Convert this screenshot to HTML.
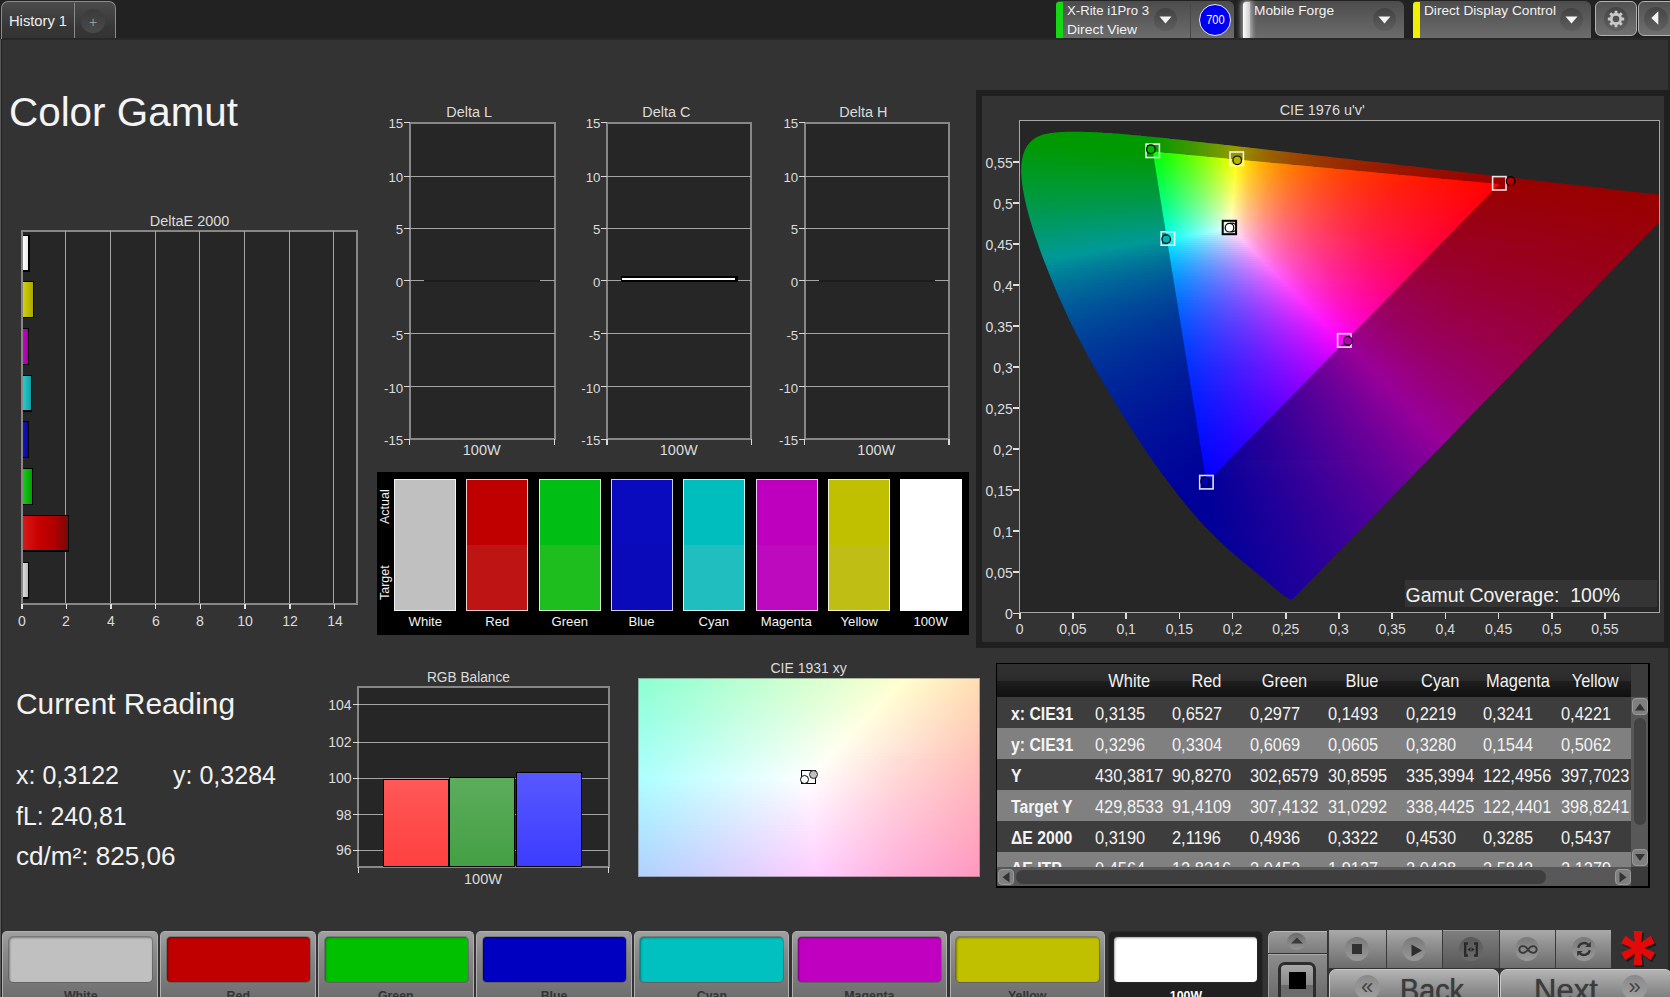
<!DOCTYPE html>
<html lang="en"><head><meta charset="utf-8"><title>Color Gamut</title>
<style>
html,body{margin:0;padding:0;background:#333;}
body{width:1670px;height:997px;overflow:hidden;font-family:"Liberation Sans",sans-serif;}
#app{position:relative;width:1670px;height:997px;overflow:hidden;background:#333;}
#app div,#app span,#app svg{position:absolute;box-sizing:border-box;}
.t{white-space:nowrap;line-height:1;display:block;}
.cl{left:0;top:0;width:639px;height:491px;}
.cl div{position:absolute;}

</style></head>
<body>
<div id="app">
<div style="left:0px;top:0px;width:1670px;height:39px;background:#222;"></div>
<div style="left:0px;top:38px;width:1670px;height:1.5px;background:#282828;"></div>
<div style="left:0px;top:39px;width:1px;height:958px;background:#5a5a5a;"></div>
<div style="left:1px;top:39px;width:1px;height:958px;background:#222;"></div>
<div style="left:1668px;top:39px;width:2px;height:958px;background:#252525;"></div>
<div style="left:1px;top:1px;width:115px;height:38px;border:1px solid #8a8a8a;border-bottom:none;border-radius:7px 7px 0 0;background:linear-gradient(#4b4b4b,#363636 70%,#333)"></div>
<div style="left:74px;top:3px;width:1px;height:35px;background:#8a8a8a;"></div>
<div style="left:2px;top:38.2px;width:1668px;height:1.3px;background:#282828;"></div>
<div style="left:81px;top:9px;width:24px;height:24px;border-radius:50%;background:linear-gradient(#3a3a3a,#4a4a4a)"></div>
<span class="t" style="left:9.00px;top:14.03px;font-size:14.5px;color:#f0f0f0;transform:scaleX(1.0139);transform-origin:0 0;">History 1</span>
<span class="t" style="left:88.91px;top:15.15px;font-size:14px;color:#999;">+</span>
<div style="left:1056px;top:1px;width:178px;height:37px;border-radius:4px 6px 0 0;background:linear-gradient(#4c4c4c,#6c6c6c);"></div>
<div style="left:1056px;top:1.5px;width:7px;height:36.5px;border-radius:3px 0 0 0;background:#14d814;"></div>
<span class="t" style="left:1066.50px;top:3.57px;font-size:13.5px;color:#f2f2f2;transform:scaleX(0.9759);transform-origin:0 0;">X-Rite i1Pro 3</span>
<span class="t" style="left:1066.50px;top:22.57px;font-size:13.5px;color:#f2f2f2;transform:scaleX(1.0291);transform-origin:0 0;">Direct View</span>
<div style="left:1154px;top:8px;width:23px;height:23px;border-radius:50%;background:linear-gradient(#424242,#5e5e5e)"></div>
<svg style="left:1159px;top:16px" width="13" height="8"><path d="M0.5 0.5h12l-6 7z" fill="#f4f4f4"/></svg>
<div style="left:1189.5px;top:4px;width:1px;height:34px;background:#484848;"></div>
<div style="left:1199.4px;top:4px;width:32px;height:32px;border-radius:50%;background:#0000f0;border:1.5px solid #e8e8ff"></div>
<span class="t" style="left:1205.27px;top:14.22px;font-size:12.5px;color:#fff;transform:scaleX(0.8871);transform-origin:50% 0;">700</span>
<div style="left:1243px;top:1px;width:161px;height:37px;border-radius:4px 6px 0 0;background:linear-gradient(#4c4c4c,#6c6c6c);"></div>
<div style="left:1243px;top:1.5px;width:7px;height:36.5px;border-radius:3px 0 0 0;background:linear-gradient(90deg,#fff,#ccc);box-shadow:0 0 5px 2px rgba(255,255,255,.55);clip-path:inset(-8px -8px 0 -8px);"></div>
<span class="t" style="left:1253.50px;top:3.57px;font-size:13.5px;color:#f2f2f2;transform:scaleX(1.0155);transform-origin:0 0;">Mobile Forge</span>
<div style="left:1372.5px;top:8px;width:23px;height:23px;border-radius:50%;background:linear-gradient(#424242,#5e5e5e)"></div>
<svg style="left:1377.5px;top:16px" width="13" height="8"><path d="M0.5 0.5h12l-6 7z" fill="#f4f4f4"/></svg>
<div style="left:1413px;top:1px;width:178px;height:37px;border-radius:4px 6px 0 0;background:linear-gradient(#4c4c4c,#6c6c6c);"></div>
<div style="left:1413px;top:1.5px;width:7px;height:36.5px;border-radius:3px 0 0 0;background:#f0f000;"></div>
<span class="t" style="left:1423.50px;top:3.57px;font-size:13.5px;color:#f2f2f2;transform:scaleX(1.0112);transform-origin:0 0;">Direct Display Control</span>
<div style="left:1559.5px;top:8px;width:23px;height:23px;border-radius:50%;background:linear-gradient(#424242,#5e5e5e)"></div>
<svg style="left:1564.5px;top:16px" width="13" height="8"><path d="M0.5 0.5h12l-6 7z" fill="#f4f4f4"/></svg>
<div style="left:1595px;top:1px;width:42px;height:35px;border-radius:6px;border:1px solid #b0b0b0;background:linear-gradient(#525252,#707070)"></div>
<div style="left:1604px;top:6.5px;width:24px;height:24px;border-radius:50%;background:linear-gradient(#444,#606060)"></div>
<svg style="left:1605px;top:7.6px" width="22" height="22" viewBox="-11 -11 22 22"><path fill-rule="evenodd" fill="#c8c8c8" d="M-1.42 -5.93L-1.43 -8.18L1.43 -8.18L1.42 -5.93L3.19 -5.20L4.77 -6.79L6.79 -4.77L5.20 -3.19L5.93 -1.42L8.18 -1.43L8.18 1.43L5.93 1.42L5.20 3.19L6.79 4.77L4.77 6.79L3.19 5.20L1.42 5.93L1.43 8.18L-1.43 8.18L-1.42 5.93L-3.19 5.20L-4.77 6.79L-6.79 4.77L-5.20 3.19L-5.93 1.42L-8.18 1.43L-8.18 -1.43L-5.93 -1.42L-5.20 -3.19L-6.79 -4.77L-4.77 -6.79L-3.19 -5.20ZM3.30 0A3.30 3.30 0 1 0 -3.30 0A3.30 3.30 0 1 0 3.30 0Z"/></svg>
<div style="left:1638px;top:1px;width:42px;height:35px;border-radius:6px;border:1px solid #b0b0b0;background:linear-gradient(#525252,#707070)"></div>
<div style="left:1644px;top:6.5px;width:24px;height:24px;border-radius:50%;background:linear-gradient(#444,#606060)"></div>
<svg style="left:1651px;top:11.3px" width="8" height="14"><path d="M7.3 0.3v13.4l-7-6.7z" fill="#f4f4f4"/></svg>
<span class="t" style="left:9.30px;top:92.14px;font-size:40px;color:#f4f4f4;transform:scaleX(1.0100);transform-origin:0 0;">Color Gamut</span>
<span class="t" style="left:151.17px;top:213.75px;font-size:14px;color:#dcdcdc;transform:scaleX(1.0318);transform-origin:50% 0;">DeltaE 2000</span>
<div style="left:20.7px;top:229.7px;width:337.6px;height:374.9px;background:#262626;border:2px solid #878787"></div>
<div style="left:65px;top:231px;width:1px;height:372px;background:#a4a4a4;"></div>
<div style="left:110px;top:231px;width:1px;height:372px;background:#a4a4a4;"></div>
<div style="left:155px;top:231px;width:1px;height:372px;background:#a4a4a4;"></div>
<div style="left:199px;top:231px;width:1px;height:372px;background:#a4a4a4;"></div>
<div style="left:244px;top:231px;width:1px;height:372px;background:#a4a4a4;"></div>
<div style="left:289px;top:231px;width:1px;height:372px;background:#a4a4a4;"></div>
<div style="left:333px;top:231px;width:1px;height:372px;background:#a4a4a4;"></div>
<div style="left:21px;top:604px;width:1.5px;height:5px;background:#e0e0e0;"></div>
<span class="t" style="left:17.67px;top:613.73px;font-size:14.5px;color:#dcdcdc;transform:scaleX(0.9700);transform-origin:50% 0;">0</span>
<div style="left:65.5px;top:604px;width:1.5px;height:5px;background:#e0e0e0;"></div>
<span class="t" style="left:62.37px;top:613.73px;font-size:14.5px;color:#dcdcdc;transform:scaleX(0.9700);transform-origin:50% 0;">2</span>
<div style="left:110.2px;top:604px;width:1.5px;height:5px;background:#e0e0e0;"></div>
<span class="t" style="left:107.07px;top:613.73px;font-size:14.5px;color:#dcdcdc;transform:scaleX(0.9700);transform-origin:50% 0;">4</span>
<div style="left:154.9px;top:604px;width:1.5px;height:5px;background:#e0e0e0;"></div>
<span class="t" style="left:151.77px;top:613.73px;font-size:14.5px;color:#dcdcdc;transform:scaleX(0.9700);transform-origin:50% 0;">6</span>
<div style="left:199.6px;top:604px;width:1.5px;height:5px;background:#e0e0e0;"></div>
<span class="t" style="left:196.47px;top:613.73px;font-size:14.5px;color:#dcdcdc;transform:scaleX(0.9700);transform-origin:50% 0;">8</span>
<div style="left:244.3px;top:604px;width:1.5px;height:5px;background:#e0e0e0;"></div>
<span class="t" style="left:237.14px;top:613.73px;font-size:14.5px;color:#dcdcdc;transform:scaleX(0.9700);transform-origin:50% 0;">10</span>
<div style="left:289px;top:604px;width:1.5px;height:5px;background:#e0e0e0;"></div>
<span class="t" style="left:281.84px;top:613.73px;font-size:14.5px;color:#dcdcdc;transform:scaleX(0.9700);transform-origin:50% 0;">12</span>
<div style="left:333.7px;top:604px;width:1.5px;height:5px;background:#e0e0e0;"></div>
<span class="t" style="left:326.54px;top:613.73px;font-size:14.5px;color:#dcdcdc;transform:scaleX(0.9700);transform-origin:50% 0;">14</span>
<div style="left:22.5px;top:234.6px;width:7.099px;height:37px;background:#000;"></div>
<div style="left:22.5px;top:235.6px;width:5.599px;height:34.5px;background:linear-gradient(90deg,#ffffff,#e8e8e8);"></div>
<div style="left:22.5px;top:281.3px;width:11.6517px;height:37px;background:#000;"></div>
<div style="left:22.5px;top:282.3px;width:10.1517px;height:34.5px;background:linear-gradient(90deg,#d2d200,#a8a800);"></div>
<div style="left:22.5px;top:328px;width:6.84198px;height:37px;background:#000;"></div>
<div style="left:22.5px;top:329px;width:5.34198px;height:34.5px;background:linear-gradient(90deg,#d000d0,#9a009a);"></div>
<div style="left:22.5px;top:374.7px;width:9.62455px;height:37px;background:#000;"></div>
<div style="left:22.5px;top:375.7px;width:8.12455px;height:34.5px;background:linear-gradient(90deg,#20d0d0,#10a0a0);"></div>
<div style="left:22.5px;top:421.4px;width:6.92467px;height:37px;background:#000;"></div>
<div style="left:22.5px;top:422.4px;width:5.42467px;height:34.5px;background:linear-gradient(90deg,#1010d0,#0a0a90);"></div>
<div style="left:22.5px;top:468.1px;width:10.532px;height:37px;background:#000;"></div>
<div style="left:22.5px;top:469.1px;width:9.03196px;height:34.5px;background:linear-gradient(90deg,#10d010,#0a9a0a);"></div>
<div style="left:22.5px;top:514.8px;width:46.8731px;height:37px;background:#000;"></div>
<div style="left:22.5px;top:515.8px;width:45.3731px;height:34.5px;background:linear-gradient(90deg,#d81818,#c80000 35%,#b00000 70%,#780808);"></div>
<div style="left:22.5px;top:561.5px;width:6.62965px;height:37px;background:#000;"></div>
<div style="left:22.5px;top:562.5px;width:5.12965px;height:34.5px;background:linear-gradient(90deg,#dcdcdc,#b8b8b8);"></div>
<span class="t" style="left:446.52px;top:105.15px;font-size:14px;color:#dcdcdc;transform:scaleX(1.0300);transform-origin:50% 0;">Delta L</span>
<div style="left:408.5px;top:121.5px;width:147px;height:318.7px;background:#262626;border:2px solid #878787"></div>
<div style="left:403.5px;top:121.8px;width:6px;height:1.5px;background:#d8d8d8;"></div>
<span class="t" style="left:388.41px;top:117.44px;font-size:13.3px;color:#dcdcdc;">15</span>
<div style="left:409.5px;top:176px;width:145px;height:1px;background:#a4a4a4;"></div>
<div style="left:403.5px;top:175.8px;width:6px;height:1.5px;background:#d8d8d8;"></div>
<span class="t" style="left:388.41px;top:171.14px;font-size:13.3px;color:#dcdcdc;">10</span>
<div style="left:409.5px;top:228px;width:145px;height:1px;background:#a4a4a4;"></div>
<div style="left:403.5px;top:227.8px;width:6px;height:1.5px;background:#d8d8d8;"></div>
<span class="t" style="left:395.80px;top:223.14px;font-size:13.3px;color:#dcdcdc;">5</span>
<div style="left:409.5px;top:280px;width:145px;height:1px;background:#a4a4a4;"></div>
<div style="left:403.5px;top:279.8px;width:6px;height:1.5px;background:#d8d8d8;"></div>
<span class="t" style="left:395.80px;top:275.64px;font-size:13.3px;color:#dcdcdc;">0</span>
<div style="left:409.5px;top:333px;width:145px;height:1px;background:#a4a4a4;"></div>
<div style="left:403.5px;top:332.8px;width:6px;height:1.5px;background:#d8d8d8;"></div>
<span class="t" style="left:391.38px;top:328.64px;font-size:13.3px;color:#dcdcdc;">-5</span>
<div style="left:409.5px;top:386px;width:145px;height:1px;background:#a4a4a4;"></div>
<div style="left:403.5px;top:385.8px;width:6px;height:1.5px;background:#d8d8d8;"></div>
<span class="t" style="left:383.98px;top:381.94px;font-size:13.3px;color:#dcdcdc;">-10</span>
<div style="left:403.5px;top:438.8px;width:6px;height:1.5px;background:#d8d8d8;"></div>
<span class="t" style="left:383.98px;top:434.14px;font-size:13.3px;color:#dcdcdc;">-15</span>
<div style="left:408.8px;top:439.2px;width:1.5px;height:6px;background:#d8d8d8;"></div>
<div style="left:553.8px;top:439.2px;width:1.5px;height:6px;background:#d8d8d8;"></div>
<span class="t" style="left:462.76px;top:443.03px;font-size:14.5px;color:#dcdcdc;">100W</span>
<div style="left:423.5px;top:279.7px;width:116px;height:2px;background:#1c1c1c;"></div>
<span class="t" style="left:642.86px;top:105.15px;font-size:14px;color:#dcdcdc;transform:scaleX(1.0300);transform-origin:50% 0;">Delta C</span>
<div style="left:605.8px;top:121.5px;width:146.5px;height:318.7px;background:#262626;border:2px solid #878787"></div>
<div style="left:600.8px;top:121.8px;width:6px;height:1.5px;background:#d8d8d8;"></div>
<span class="t" style="left:585.71px;top:117.44px;font-size:13.3px;color:#dcdcdc;">15</span>
<div style="left:606.8px;top:176px;width:144.5px;height:1px;background:#a4a4a4;"></div>
<div style="left:600.8px;top:175.8px;width:6px;height:1.5px;background:#d8d8d8;"></div>
<span class="t" style="left:585.71px;top:171.14px;font-size:13.3px;color:#dcdcdc;">10</span>
<div style="left:606.8px;top:228px;width:144.5px;height:1px;background:#a4a4a4;"></div>
<div style="left:600.8px;top:227.8px;width:6px;height:1.5px;background:#d8d8d8;"></div>
<span class="t" style="left:593.10px;top:223.14px;font-size:13.3px;color:#dcdcdc;">5</span>
<div style="left:606.8px;top:280px;width:144.5px;height:1px;background:#a4a4a4;"></div>
<div style="left:600.8px;top:279.8px;width:6px;height:1.5px;background:#d8d8d8;"></div>
<span class="t" style="left:593.10px;top:275.64px;font-size:13.3px;color:#dcdcdc;">0</span>
<div style="left:606.8px;top:333px;width:144.5px;height:1px;background:#a4a4a4;"></div>
<div style="left:600.8px;top:332.8px;width:6px;height:1.5px;background:#d8d8d8;"></div>
<span class="t" style="left:588.68px;top:328.64px;font-size:13.3px;color:#dcdcdc;">-5</span>
<div style="left:606.8px;top:386px;width:144.5px;height:1px;background:#a4a4a4;"></div>
<div style="left:600.8px;top:385.8px;width:6px;height:1.5px;background:#d8d8d8;"></div>
<span class="t" style="left:581.28px;top:381.94px;font-size:13.3px;color:#dcdcdc;">-10</span>
<div style="left:600.8px;top:438.8px;width:6px;height:1.5px;background:#d8d8d8;"></div>
<span class="t" style="left:581.28px;top:434.14px;font-size:13.3px;color:#dcdcdc;">-15</span>
<div style="left:606.1px;top:439.2px;width:1.5px;height:6px;background:#d8d8d8;"></div>
<div style="left:750.6px;top:439.2px;width:1.5px;height:6px;background:#d8d8d8;"></div>
<span class="t" style="left:659.76px;top:443.03px;font-size:14.5px;color:#dcdcdc;">100W</span>
<div style="left:620.8px;top:276.2px;width:117px;height:5.5px;background:#000;"></div>
<div style="left:622.3px;top:277.5px;width:113px;height:2.8px;background:#fff;"></div>
<span class="t" style="left:839.96px;top:105.15px;font-size:14px;color:#dcdcdc;transform:scaleX(1.0300);transform-origin:50% 0;">Delta H</span>
<div style="left:803.5px;top:121.5px;width:146.5px;height:318.7px;background:#262626;border:2px solid #878787"></div>
<div style="left:798.5px;top:121.8px;width:6px;height:1.5px;background:#d8d8d8;"></div>
<span class="t" style="left:783.41px;top:117.44px;font-size:13.3px;color:#dcdcdc;">15</span>
<div style="left:804.5px;top:176px;width:144.5px;height:1px;background:#a4a4a4;"></div>
<div style="left:798.5px;top:175.8px;width:6px;height:1.5px;background:#d8d8d8;"></div>
<span class="t" style="left:783.41px;top:171.14px;font-size:13.3px;color:#dcdcdc;">10</span>
<div style="left:804.5px;top:228px;width:144.5px;height:1px;background:#a4a4a4;"></div>
<div style="left:798.5px;top:227.8px;width:6px;height:1.5px;background:#d8d8d8;"></div>
<span class="t" style="left:790.80px;top:223.14px;font-size:13.3px;color:#dcdcdc;">5</span>
<div style="left:804.5px;top:280px;width:144.5px;height:1px;background:#a4a4a4;"></div>
<div style="left:798.5px;top:279.8px;width:6px;height:1.5px;background:#d8d8d8;"></div>
<span class="t" style="left:790.80px;top:275.64px;font-size:13.3px;color:#dcdcdc;">0</span>
<div style="left:804.5px;top:333px;width:144.5px;height:1px;background:#a4a4a4;"></div>
<div style="left:798.5px;top:332.8px;width:6px;height:1.5px;background:#d8d8d8;"></div>
<span class="t" style="left:786.38px;top:328.64px;font-size:13.3px;color:#dcdcdc;">-5</span>
<div style="left:804.5px;top:386px;width:144.5px;height:1px;background:#a4a4a4;"></div>
<div style="left:798.5px;top:385.8px;width:6px;height:1.5px;background:#d8d8d8;"></div>
<span class="t" style="left:778.98px;top:381.94px;font-size:13.3px;color:#dcdcdc;">-10</span>
<div style="left:798.5px;top:438.8px;width:6px;height:1.5px;background:#d8d8d8;"></div>
<span class="t" style="left:778.98px;top:434.14px;font-size:13.3px;color:#dcdcdc;">-15</span>
<div style="left:803.8px;top:439.2px;width:1.5px;height:6px;background:#d8d8d8;"></div>
<div style="left:948.3px;top:439.2px;width:1.5px;height:6px;background:#d8d8d8;"></div>
<span class="t" style="left:857.36px;top:443.03px;font-size:14.5px;color:#dcdcdc;">100W</span>
<div style="left:818.5px;top:279.7px;width:116px;height:2px;background:#1c1c1c;"></div>
<div style="left:377px;top:472px;width:592px;height:162.8px;background:#000;"></div>
<div style="left:394px;top:479px;width:62px;height:131.5px;background:linear-gradient(#c0c0c0 50%,#c0c0c0 50%);border:1px solid rgba(255,255,255,.8)"></div>
<span class="t" style="left:407.75px;top:614.57px;font-size:13.5px;color:#f4f4f4;transform:scaleX(0.9700);transform-origin:50% 0;">White</span>
<div style="left:466.3px;top:479px;width:62px;height:131.5px;background:linear-gradient(#c00000 50%,#be1414 50%);border:1px solid rgba(255,255,255,.8)"></div>
<span class="t" style="left:484.92px;top:614.57px;font-size:13.5px;color:#f4f4f4;transform:scaleX(0.9700);transform-origin:50% 0;">Red</span>
<div style="left:538.6px;top:479px;width:62px;height:131.5px;background:linear-gradient(#00be14 50%,#1ebe1e 50%);border:1px solid rgba(255,255,255,.8)"></div>
<span class="t" style="left:550.84px;top:614.57px;font-size:13.5px;color:#f4f4f4;transform:scaleX(0.9700);transform-origin:50% 0;">Green</span>
<div style="left:610.9px;top:479px;width:62px;height:131.5px;background:linear-gradient(#0a0abe 50%,#0a0ab8 50%);border:1px solid rgba(255,255,255,.8)"></div>
<span class="t" style="left:628.39px;top:614.57px;font-size:13.5px;color:#f4f4f4;transform:scaleX(0.9700);transform-origin:50% 0;">Blue</span>
<div style="left:683.2px;top:479px;width:62px;height:131.5px;background:linear-gradient(#00bebe 50%,#20bebe 50%);border:1px solid rgba(255,255,255,.8)"></div>
<span class="t" style="left:698.44px;top:614.57px;font-size:13.5px;color:#f4f4f4;transform:scaleX(0.9700);transform-origin:50% 0;">Cyan</span>
<div style="left:755.5px;top:479px;width:62px;height:131.5px;background:linear-gradient(#be00be 50%,#be0abe 50%);border:1px solid rgba(255,255,255,.8)"></div>
<span class="t" style="left:760.23px;top:614.57px;font-size:13.5px;color:#f4f4f4;transform:scaleX(0.9700);transform-origin:50% 0;">Magenta</span>
<div style="left:827.8px;top:479px;width:62px;height:131.5px;background:linear-gradient(#c0c000 50%,#bebe14 50%);border:1px solid rgba(255,255,255,.8)"></div>
<span class="t" style="left:839.54px;top:614.57px;font-size:13.5px;color:#f4f4f4;transform:scaleX(0.9700);transform-origin:50% 0;">Yellow</span>
<div style="left:900.1px;top:479px;width:62px;height:131.5px;background:linear-gradient(#ffffff 50%,#ffffff 50%);border:1px solid rgba(255,255,255,.8)"></div>
<span class="t" style="left:913.47px;top:614.57px;font-size:13.5px;color:#f4f4f4;transform:scaleX(0.9700);transform-origin:50% 0;">100W</span>
<span class="t" style="left:379px;top:524px;font-size:12.5px;color:#f0f0f0;transform:rotate(-90deg);transform-origin:0 0;">Actual</span>
<span class="t" style="left:379px;top:600px;font-size:12.5px;color:#f0f0f0;transform:rotate(-90deg);transform-origin:0 0;">Target</span>
<span class="t" style="left:16.00px;top:690.05px;font-size:29px;color:#f2f2f2;transform:scaleX(1.0293);transform-origin:0 0;">Current Reading</span>
<span class="t" style="left:16.00px;top:763.41px;font-size:25.5px;color:#f2f2f2;transform:scaleX(0.9818);transform-origin:0 0;">x: 0,3122</span>
<span class="t" style="left:173.00px;top:763.41px;font-size:25.5px;color:#f2f2f2;transform:scaleX(0.9818);transform-origin:0 0;">y: 0,3284</span>
<span class="t" style="left:16.00px;top:803.91px;font-size:25.5px;color:#f2f2f2;transform:scaleX(0.9743);transform-origin:0 0;">fL: 240,81</span>
<span class="t" style="left:16.00px;top:844.11px;font-size:25.5px;color:#f2f2f2;transform:scaleX(1.0231);transform-origin:0 0;">cd/m²: 825,06</span>
<span class="t" style="left:425.99px;top:670.15px;font-size:14px;color:#dcdcdc;transform:scaleX(0.9786);transform-origin:50% 0;">RGB Balance</span>
<div style="left:357.4px;top:685.8px;width:252.3px;height:182.2px;background:#262626;border:2px solid #878787"></div>
<div style="left:359px;top:704px;width:249px;height:1px;background:#a4a4a4;"></div>
<div style="left:352.5px;top:703.8px;width:6px;height:1.5px;background:#d8d8d8;"></div>
<span class="t" style="left:328.14px;top:698.15px;font-size:14px;color:#dcdcdc;">104</span>
<div style="left:359px;top:742px;width:249px;height:1px;background:#a4a4a4;"></div>
<div style="left:352.5px;top:741.8px;width:6px;height:1.5px;background:#d8d8d8;"></div>
<span class="t" style="left:328.14px;top:735.15px;font-size:14px;color:#dcdcdc;">102</span>
<div style="left:359px;top:778px;width:249px;height:1px;background:#a4a4a4;"></div>
<div style="left:352.5px;top:777.8px;width:6px;height:1.5px;background:#d8d8d8;"></div>
<span class="t" style="left:328.14px;top:771.15px;font-size:14px;color:#dcdcdc;">100</span>
<div style="left:359px;top:814px;width:249px;height:1px;background:#a4a4a4;"></div>
<div style="left:352.5px;top:813.8px;width:6px;height:1.5px;background:#d8d8d8;"></div>
<span class="t" style="left:335.93px;top:807.65px;font-size:14px;color:#dcdcdc;">98</span>
<div style="left:359px;top:850px;width:249px;height:1px;background:#a4a4a4;"></div>
<div style="left:352.5px;top:849.8px;width:6px;height:1.5px;background:#d8d8d8;"></div>
<span class="t" style="left:335.93px;top:843.15px;font-size:14px;color:#dcdcdc;">96</span>
<div style="left:357.7px;top:867px;width:1.5px;height:6px;background:#d8d8d8;"></div>
<div style="left:607.9px;top:867px;width:1.5px;height:6px;background:#d8d8d8;"></div>
<div style="left:382.6px;top:778.6px;width:66.3px;height:88.4px;background:#000;"></div>
<div style="left:383.6px;top:779.6px;width:64.3px;height:86.9px;background:linear-gradient(#ff5858,#ff4040);"></div>
<div style="left:448.8px;top:776.6px;width:66.3px;height:90.4px;background:#000;"></div>
<div style="left:449.8px;top:777.6px;width:64.3px;height:88.9px;background:linear-gradient(#5cac5c,#44a044);"></div>
<div style="left:515.5px;top:772.4px;width:66.5px;height:94.6px;background:#000;"></div>
<div style="left:516.5px;top:773.4px;width:64.5px;height:93.1px;background:linear-gradient(#5858ff,#3c3cff);"></div>
<span class="t" style="left:464.06px;top:872.03px;font-size:14.5px;color:#dcdcdc;">100W</span>
<div style="left:975.7px;top:89.8px;width:694.3px;height:558px;background:#333;border:6.5px solid #1f1f1f"></div>
<span class="t" style="left:1280.81px;top:102.85px;font-size:14px;color:#dcdcdc;transform:scaleX(1.0317);transform-origin:50% 0;">CIE 1976 u'v'</span>
<div style="left:1018.6px;top:119.6px;width:641.8px;height:493.8px;background:#262626;border:1.7px solid #a6a6a6"></div>
<div style="left:1020px;top:121px;width:639px;height:491px;overflow:hidden"><div class="cl" style="clip-path:polygon(273.1px 477.8px,270.4px 478.3px,268.1px 477.5px,266.0px 476.1px,264.0px 474.7px,261.6px 472.8px,259.6px 471.2px,257.5px 469.5px,255.1px 467.5px,252.4px 465.2px,249.5px 462.7px,246.3px 460.1px,244.6px 458.6px,242.8px 457.1px,240.9px 455.5px,238.9px 453.9px,236.7px 452.1px,234.5px 450.2px,232.1px 448.3px,229.7px 446.3px,227.2px 444.2px,224.5px 442.0px,221.8px 439.8px,219.0px 437.4px,216.0px 434.9px,213.0px 432.2px,209.7px 429.4px,206.4px 426.4px,203.0px 423.3px,199.4px 419.9px,195.8px 416.5px,192.0px 412.8px,188.1px 408.8px,183.9px 404.4px,179.5px 399.7px,174.8px 394.3px,169.8px 388.4px,164.5px 382.0px,158.9px 375.1px,153.1px 367.6px,147.1px 359.8px,141.0px 351.5px,134.7px 342.8px,128.3px 333.5px,121.8px 323.9px,115.1px 313.7px,108.3px 303.1px,101.5px 292.2px,94.7px 280.9px,87.9px 269.5px,81.1px 257.9px,74.3px 246.2px,67.8px 234.4px,61.4px 222.5px,55.2px 210.6px,49.4px 198.9px,44.0px 187.3px,38.9px 176.0px,34.2px 164.9px,29.7px 154.1px,25.6px 143.7px,21.7px 133.7px,18.3px 124.1px,15.1px 115.1px,12.4px 106.5px,10.0px 98.5px,7.9px 90.9px,6.1px 83.9px,4.6px 77.3px,3.4px 71.1px,2.5px 65.4px,1.8px 60.1px,1.4px 55.2px,1.2px 50.7px,1.3px 46.4px,1.5px 42.5px,2.0px 38.9px,2.7px 35.5px,3.6px 32.4px,4.7px 29.5px,6.0px 26.9px,7.4px 24.5px,9.1px 22.4px,10.9px 20.4px,12.8px 18.8px,14.9px 17.3px,17.1px 16.0px,19.4px 14.9px,21.8px 14.0px,24.3px 13.3px,26.9px 12.7px,29.6px 12.2px,32.4px 11.8px,35.2px 11.5px,38.0px 11.3px,41.0px 11.1px,44.0px 10.9px,47.0px 10.8px,50.0px 10.8px,53.0px 10.8px,56.0px 10.7px,59.1px 10.8px,62.1px 10.8px,65.1px 10.9px,68.2px 10.9px,71.3px 11.0px,74.4px 11.2px,77.6px 11.3px,80.8px 11.5px,84.0px 11.7px,87.4px 11.9px,90.7px 12.1px,94.1px 12.4px,97.6px 12.6px,101.1px 12.9px,104.7px 13.2px,108.3px 13.5px,112.0px 13.9px,115.8px 14.2px,119.7px 14.6px,123.6px 15.0px,127.6px 15.4px,131.7px 15.8px,135.8px 16.2px,140.1px 16.6px,144.4px 17.1px,148.8px 17.6px,153.4px 18.1px,158.0px 18.6px,162.7px 19.1px,167.5px 19.6px,172.4px 20.2px,177.4px 20.7px,182.5px 21.3px,187.7px 21.9px,193.0px 22.5px,198.4px 23.1px,203.9px 23.7px,209.5px 24.3px,215.3px 25.0px,221.1px 25.7px,227.1px 26.3px,233.2px 27.0px,239.4px 27.8px,245.7px 28.5px,252.1px 29.2px,258.6px 30.0px,265.3px 30.7px,272.0px 31.5px,278.9px 32.3px,285.8px 33.1px,292.9px 33.9px,300.0px 34.7px,307.3px 35.6px,314.6px 36.4px,322.0px 37.3px,329.5px 38.1px,337.1px 39.0px,344.7px 39.9px,352.4px 40.8px,360.2px 41.6px,368.0px 42.5px,375.8px 43.5px,383.6px 44.4px,391.4px 45.2px,399.0px 46.1px,406.6px 47.0px,414.1px 47.9px,421.6px 48.7px,429.1px 49.6px,436.6px 50.4px,444.0px 51.3px,451.4px 52.1px,458.6px 53.0px,465.8px 53.8px,472.7px 54.6px,479.5px 55.4px,486.1px 56.1px,492.6px 56.9px,498.9px 57.6px,505.1px 58.3px,511.1px 59.0px,517.0px 59.7px,522.7px 60.3px,528.2px 61.0px,533.6px 61.6px,538.8px 62.2px,543.8px 62.8px,548.6px 63.3px,553.3px 63.9px,557.8px 64.4px,562.1px 64.9px,566.3px 65.3px,570.3px 65.8px,574.2px 66.3px,578.0px 66.7px,581.6px 67.1px,585.1px 67.5px,588.5px 67.9px,591.9px 68.3px,595.1px 68.7px,598.3px 69.0px,601.3px 69.4px,604.3px 69.7px,607.2px 70.0px,609.9px 70.4px,615.2px 71.0px,620.1px 71.5px,624.6px 72.1px,628.8px 72.5px,632.5px 73.0px,635.7px 73.3px,638.7px 73.7px,641.3px 74.0px,644.9px 74.4px,647.9px 74.7px,651.1px 75.1px,653.8px 75.4px,656.6px 75.7px,659.4px 76.1px,662.2px 76.4px,663.0px 76.5px)"><div style="top:9px;left:33px;width:50px;height:3px;background:linear-gradient(90deg,#090 0px,#090 49px)"></div><div style="top:12px;left:19px;width:102px;height:3px;background:linear-gradient(90deg,#090 0px,#090 101px)"></div><div style="top:15px;left:13px;width:137px;height:3px;background:linear-gradient(90deg,#090 0px,#090 117px,#1b9900 136px)"></div><div style="top:18px;left:9px;width:169px;height:3px;background:linear-gradient(90deg,#009901 0px,#090 121px,#489900 168px)"></div><div style="top:21px;left:6px;width:198px;height:3px;background:linear-gradient(90deg,#009904 0px,#090 125px,#3a9900 163px,#799900 197px)"></div><div style="top:24px;left:4px;width:226px;height:3px;background:linear-gradient(90deg,#009907 0px,#090 127px,#469900 172px,#989900 213px,#998200 225px)"></div><div style="top:27px;left:3px;width:254px;height:3px;background:linear-gradient(90deg,#00990a 0px,#090 129px,#479900 174px,#990 214px,#970 232px,#995b00 253px)"></div><div style="top:30px;left:2px;width:281px;height:3px;background:linear-gradient(90deg,#00990d 0px,#009901 130px,#459900 174px,#990 215px,#996800 243px,#994300 280px)"></div><div style="top:33px;left:1px;width:308px;height:3px;background:linear-gradient(90deg,#009910 0px,#009905 132px,#479900 176px,#989900 215px,#970 233px,#995c00 253px,#994500 278px,#993200 307px)"></div><div style="top:36px;left:0px;width:335px;height:3px;background:linear-gradient(90deg,#009913 0px,#009909 133px,#479904 177px,#989900 216px,#997200 237px,#995200 263px,#993900 295px,#992500 334px)"></div><div style="top:39px;left:0px;width:361px;height:3px;background:linear-gradient(90deg,#009916 0px,#00990d 134px,#489909 178px,#999904 216px,#996d00 240px,#994b00 270px,#993000 309px,#991c00 360px)"></div><div style="top:42px;left:0px;width:387px;height:3px;background:linear-gradient(90deg,#009919 0px,#091 134px,#77990b 201px,#979909 215px,#996803 243px,#940 278px,#992800 324px,#991400 386px)"></div><div style="top:45px;left:0px;width:413px;height:3px;background:linear-gradient(90deg,#00991c 0px,#009915 135px,#997609 233px,#995104 262px,#993400 300px,#991e00 349px,#990d00 412px)"></div><div style="top:48px;left:0px;width:439px;height:3px;background:linear-gradient(90deg,#00991f 0px,#00991a 135px,#0a9919 142px,#994d07 265px,#993603 295px,#992400 333px,#990800 438px)"></div><div style="top:51px;left:0px;width:465px;height:3px;background:linear-gradient(90deg,#009923 0px,#00991e 136px,#09991e 142px,#993506 297px,#991800 366px,#990300 464px)"></div><div style="top:54px;left:0px;width:491px;height:3px;background:linear-gradient(90deg,#009926 0px,#009923 136px,#0a9922 143px,#992405 329px,#990f00 399px,#900 490px)"></div><div style="top:57px;left:0px;width:518px;height:3px;background:linear-gradient(90deg,#009929 0px,#009927 137px,#0a9927 143px,#991804 361px,#990400 452px,#900 517px)"></div><div style="top:60px;left:0px;width:544px;height:3px;background:linear-gradient(90deg,#00992c 0px,#00992c 137px,#0b992c 144px,#990f04 393px,#900 480px,#900 543px)"></div><div style="top:63px;left:0px;width:570px;height:3px;background:linear-gradient(90deg,#009930 0px,#009930 137px,#0a9931 144px,#990803 425px,#990001 478px,#900 569px)"></div><div style="top:66px;left:1px;width:595px;height:3px;background:linear-gradient(90deg,#093 0px,#009935 137px,#0b9935 144px,#990203 456px,#900 594px)"></div><div style="top:69px;left:1px;width:621px;height:3px;background:linear-gradient(90deg,#009937 0px,#00993a 137px,#0a993a 144px,#990104 463px,#900 620px)"></div><div style="top:72px;left:2px;width:637px;height:3px;background:linear-gradient(90deg,#00993a 0px,#00993f 137px,#0b9940 144px,#990105 459px,#900 636px)"></div><div style="top:75px;left:2px;width:637px;height:3px;background:linear-gradient(90deg,#00993e 0px,#094 137px,#0a9945 144px,#990107 456px,#900 636px)"></div><div style="top:78px;left:3px;width:636px;height:3px;background:linear-gradient(90deg,#009941 0px,#00994a 137px,#0b994a 144px,#990108 452px,#900 635px)"></div><div style="top:81px;left:4px;width:635px;height:3px;background:linear-gradient(90deg,#009945 0px,#00994f 136px,#0b9950 143px,#99010a 448px,#990001 634px)"></div><div style="top:84px;left:4px;width:635px;height:3px;background:linear-gradient(90deg,#009949 0px,#009954 137px,#0a9955 143px,#99010c 445px,#990002 634px)"></div><div style="top:87px;left:5px;width:634px;height:3px;background:linear-gradient(90deg,#00994d 0px,#00995a 136px,#0b995b 143px,#99010d 441px,#990003 633px)"></div><div style="top:90px;left:6px;width:633px;height:3px;background:linear-gradient(90deg,#009951 0px,#009960 136px,#0a9961 142px,#99010f 437px,#990004 632px)"></div><div style="top:93px;left:7px;width:632px;height:3px;background:linear-gradient(90deg,#095 0px,#096 135px,#0b9967 142px,#990111 433px,#990005 631px)"></div><div style="top:96px;left:7px;width:632px;height:3px;background:linear-gradient(90deg,#009959 0px,#00996c 136px,#0b996d 142px,#990113 430px,#990006 631px)"></div><div style="top:99px;left:8px;width:631px;height:3px;background:linear-gradient(90deg,#00995d 0px,#009972 135px,#0c9973 142px,#990114 426px,#990006 630px)"></div><div style="top:102px;left:9px;width:630px;height:3px;background:linear-gradient(90deg,#009961 0px,#009978 135px,#0b997a 141px,#990116 422px,#990007 629px)"></div><div style="top:105px;left:10px;width:627px;height:3px;background:linear-gradient(90deg,#009965 0px,#00997e 134px,#0c9980 141px,#990118 418px,#990008 626px)"></div><div style="top:108px;left:11px;width:623px;height:3px;background:linear-gradient(90deg,#009969 0px,#009985 133px,#0b9987 140px,#99011a 415px,#990009 622px)"></div><div style="top:111px;left:12px;width:619px;height:3px;background:linear-gradient(90deg,#00996e 0px,#00998c 133px,#0c998e 140px,#99011c 411px,#99000a 618px)"></div><div style="top:114px;left:13px;width:615px;height:3px;background:linear-gradient(90deg,#009972 0px,#009992 132px,#0c9995 139px,#99011e 407px,#99000b 614px)"></div><div style="top:117px;left:14px;width:611px;height:3px;background:linear-gradient(90deg,#097 0px,#009898 132px,#0c9699 139px,#990120 403px,#99000c 610px)"></div><div style="top:120px;left:15px;width:607px;height:3px;background:linear-gradient(90deg,#00997c 0px,#009997 106px,#009299 131px,#0b8f99 138px,#990122 399px,#99000e 606px)"></div><div style="top:123px;left:16px;width:603px;height:3px;background:linear-gradient(90deg,#009980 0px,#009997 87px,#008b99 131px,#0c8999 138px,#990125 395px,#99000f 602px)"></div><div style="top:126px;left:17px;width:599px;height:3px;background:linear-gradient(90deg,#009985 0px,#009898 74px,#008599 131px,#0b8399 137px,#990127 391px,#990010 598px)"></div><div style="top:129px;left:18px;width:595px;height:3px;background:linear-gradient(90deg,#00998a 0px,#009898 55px,#008099 130px,#0b7d99 137px,#990129 387px,#99001b 475px,#901 594px)"></div><div style="top:132px;left:19px;width:592px;height:3px;background:linear-gradient(90deg,#00998f 0px,#009799 41px,#007a99 130px,#0a7899 136px,#99012c 383px,#99001d 472px,#990012 591px)"></div><div style="top:135px;left:20px;width:588px;height:3px;background:linear-gradient(90deg,#009994 0px,#009799 23px,#007599 129px,#0a7399 136px,#99012e 379px,#99001f 467px,#990013 587px)"></div><div style="top:138px;left:22px;width:583px;height:3px;background:linear-gradient(90deg,#009899 0px,#007099 128px,#096e99 134px,#990131 374px,#990020 462px,#990014 582px)"></div><div style="top:141px;left:23px;width:579px;height:3px;background:linear-gradient(90deg,#009399 0px,#006c99 127px,#0a6a99 134px,#990133 370px,#902 458px,#990015 578px)"></div><div style="top:144px;left:24px;width:575px;height:3px;background:linear-gradient(90deg,#008e99 0px,#006899 127px,#096699 133px,#990136 366px,#990024 454px,#990017 574px)"></div><div style="top:147px;left:25px;width:571px;height:3px;background:linear-gradient(90deg,#008999 0px,#006499 126px,#096199 133px,#990239 362px,#990026 450px,#990018 570px)"></div><div style="top:150px;left:26px;width:567px;height:3px;background:linear-gradient(90deg,#008599 0px,#006099 126px,#095e99 132px,#99023c 358px,#990028 446px,#990019 566px)"></div><div style="top:153px;left:27px;width:563px;height:3px;background:linear-gradient(90deg,#008199 0px,#005c99 125px,#095a99 132px,#99023f 354px,#99002a 441px,#99001a 562px)"></div><div style="top:156px;left:29px;width:558px;height:3px;background:linear-gradient(90deg,#007c99 0px,#005999 124px,#085799 130px,#990242 349px,#99002c 436px,#99001c 557px)"></div><div style="top:159px;left:30px;width:554px;height:3px;background:linear-gradient(90deg,#007899 0px,#059 123px,#095399 130px,#990144 346px,#99002d 433px,#99001d 553px)"></div><div style="top:162px;left:31px;width:550px;height:3px;background:linear-gradient(90deg,#007499 0px,#005299 123px,#990148 342px,#990030 428px,#99001e 549px)"></div><div style="top:165px;left:32px;width:547px;height:3px;background:linear-gradient(90deg,#007199 0px,#004f99 122px,#99024b 338px,#990032 425px,#990020 546px)"></div><div style="top:168px;left:34px;width:542px;height:3px;background:linear-gradient(90deg,#006d99 0px,#004c99 121px,#99024e 333px,#990034 419px,#990021 541px)"></div><div style="top:171px;left:35px;width:538px;height:3px;background:linear-gradient(90deg,#006a99 0px,#004a99 120px,#990252 329px,#990036 415px,#902 537px)"></div><div style="top:174px;left:36px;width:534px;height:3px;background:linear-gradient(90deg,#006799 0px,#004799 120px,#990256 325px,#990038 411px,#990024 533px)"></div><div style="top:177px;left:38px;width:529px;height:3px;background:linear-gradient(90deg,#006399 0px,#049 118px,#990259 320px,#99003b 406px,#990025 528px)"></div><div style="top:180px;left:39px;width:525px;height:3px;background:linear-gradient(90deg,#006099 0px,#004299 118px,#99025d 316px,#99003d 402px,#990027 524px)"></div><div style="top:183px;left:40px;width:521px;height:3px;background:linear-gradient(90deg,#005d99 0px,#003f99 117px,#990261 312px,#990040 397px,#990028 520px)"></div><div style="top:186px;left:42px;width:516px;height:3px;background:linear-gradient(90deg,#005a99 0px,#003d99 116px,#990266 307px,#990042 392px,#99002a 515px)"></div><div style="top:189px;left:43px;width:512px;height:3px;background:linear-gradient(90deg,#005899 0px,#003b99 115px,#99026a 303px,#990045 388px,#99002b 511px)"></div><div style="top:192px;left:44px;width:508px;height:3px;background:linear-gradient(90deg,#059 0px,#003999 115px,#99026f 299px,#990059 337px,#990047 384px,#99002d 507px)"></div><div style="top:195px;left:46px;width:503px;height:3px;background:linear-gradient(90deg,#005299 0px,#003799 113px,#990273 294px,#99005d 332px,#99004a 378px,#99002e 502px)"></div><div style="top:198px;left:47px;width:499px;height:3px;background:linear-gradient(90deg,#005099 0px,#003599 113px,#990278 290px,#990061 328px,#99004d 374px,#990030 498px)"></div><div style="top:201px;left:49px;width:495px;height:3px;background:linear-gradient(90deg,#004d99 0px,#039 111px,#99027d 285px,#990064 323px,#990050 369px,#990032 494px)"></div><div style="top:204px;left:50px;width:491px;height:3px;background:linear-gradient(90deg,#004b99 0px,#003199 111px,#990283 281px,#990068 319px,#990053 365px,#903 490px)"></div><div style="top:207px;left:52px;width:486px;height:3px;background:linear-gradient(90deg,#004999 0px,#002f99 109px,#990287 277px,#99006c 314px,#990056 360px,#990035 485px)"></div><div style="top:210px;left:53px;width:482px;height:3px;background:linear-gradient(90deg,#004799 0px,#002e99 109px,#99028d 273px,#990071 310px,#990059 356px,#990046 412px,#990037 481px)"></div><div style="top:213px;left:55px;width:477px;height:3px;background:linear-gradient(90deg,#049 0px,#002c99 107px,#990293 268px,#990075 305px,#99005c 351px,#990049 407px,#990039 476px)"></div><div style="top:216px;left:56px;width:473px;height:3px;background:linear-gradient(90deg,#004299 0px,#002a99 107px,#990298 265px,#990079 302px,#990060 347px,#99004b 403px,#99003a 472px)"></div><div style="top:219px;left:58px;width:468px;height:3px;background:linear-gradient(90deg,#004099 0px,#002999 105px,#990098 266px,#99007a 302px,#990061 346px,#99004d 400px,#99003c 467px)"></div><div style="top:222px;left:59px;width:464px;height:3px;background:linear-gradient(90deg,#003e99 0px,#002799 105px,#990098 268px,#99007a 304px,#990062 347px,#99004f 399px,#99003e 463px)"></div><div style="top:225px;left:61px;width:459px;height:3px;background:linear-gradient(90deg,#003c99 0px,#002699 103px,#990098 269px,#99007b 304px,#990064 346px,#990040 458px)"></div><div style="top:228px;left:63px;width:454px;height:3px;background:linear-gradient(90deg,#003a99 0px,#002599 102px,#809 252px,#990098 270px,#99007c 304px,#990065 345px,#990042 453px)"></div><div style="top:231px;left:64px;width:450px;height:3px;background:linear-gradient(90deg,#003999 0px,#002399 101px,#830099 248px,#990098 272px,#99007d 305px,#990067 345px,#904 449px)"></div><div style="top:234px;left:66px;width:445px;height:3px;background:linear-gradient(90deg,#003799 0px,#029 100px,#7d0099 243px,#990098 273px,#99007e 306px,#990068 344px,#990046 444px)"></div><div style="top:237px;left:68px;width:441px;height:3px;background:linear-gradient(90deg,#003599 0px,#002199 98px,#780099 238px,#990098 274px,#99007f 306px,#99006a 343px,#990048 440px)"></div><div style="top:240px;left:69px;width:437px;height:3px;background:linear-gradient(90deg,#039 0px,#001f99 98px,#730099 234px,#990098 276px,#990080 307px,#99006b 343px,#99004a 436px)"></div><div style="top:243px;left:71px;width:432px;height:3px;background:linear-gradient(90deg,#003299 0px,#001e99 96px,#6e0099 229px,#990098 277px,#99006d 342px,#99004c 431px)"></div><div style="top:246px;left:73px;width:427px;height:3px;background:linear-gradient(90deg,#003099 0px,#001d99 95px,#6b0099 225px,#990098 278px,#99006e 341px,#99004e 426px)"></div><div style="top:249px;left:74px;width:423px;height:3px;background:linear-gradient(90deg,#002f99 0px,#001c99 94px,#609 221px,#990098 280px,#99006f 341px,#990051 422px)"></div><div style="top:252px;left:76px;width:418px;height:3px;background:linear-gradient(90deg,#002d99 0px,#001b99 93px,#620099 216px,#909 280px,#990071 340px,#990053 417px)"></div><div style="top:255px;left:78px;width:413px;height:3px;background:linear-gradient(90deg,#002b99 0px,#001a99 91px,#5e0099 211px,#909 281px,#990072 339px,#905 412px)"></div><div style="top:258px;left:79px;width:409px;height:3px;background:linear-gradient(90deg,#002a99 0px,#001899 91px,#590099 207px,#909 283px,#990074 339px,#990058 408px)"></div><div style="top:261px;left:81px;width:404px;height:3px;background:linear-gradient(90deg,#002999 0px,#001899 89px,#509 202px,#909 284px,#990076 337px,#99005a 403px)"></div><div style="top:264px;left:83px;width:399px;height:3px;background:linear-gradient(90deg,#002799 0px,#011699 88px,#520099 197px,#980099 284px,#907 337px,#99005d 398px)"></div><div style="top:267px;left:85px;width:394px;height:3px;background:linear-gradient(90deg,#002699 0px,#001699 86px,#4e0099 192px,#980099 285px,#990078 336px,#99005f 393px)"></div><div style="top:270px;left:86px;width:390px;height:3px;background:linear-gradient(90deg,#002499 0px,#011599 86px,#4b0099 189px,#980099 287px,#99007a 335px,#990062 389px)"></div><div style="top:273px;left:88px;width:386px;height:3px;background:linear-gradient(90deg,#002399 0px,#001499 84px,#470099 184px,#980099 288px,#99007b 334px,#990064 385px)"></div><div style="top:276px;left:90px;width:381px;height:3px;background:linear-gradient(90deg,#029 0px,#011399 83px,#409 179px,#980099 289px,#99007d 333px,#990067 380px)"></div><div style="top:279px;left:92px;width:376px;height:3px;background:linear-gradient(90deg,#002199 0px,#001299 81px,#410099 174px,#980099 290px,#99007e 332px,#99006a 375px)"></div><div style="top:282px;left:94px;width:371px;height:3px;background:linear-gradient(90deg,#001f99 0px,#019 79px,#3d0099 169px,#980099 291px,#99006d 370px)"></div><div style="top:285px;left:95px;width:367px;height:3px;background:linear-gradient(90deg,#001e99 0px,#001099 79px,#3a0099 165px,#980099 293px,#990070 366px)"></div><div style="top:288px;left:97px;width:362px;height:3px;background:linear-gradient(90deg,#001d99 0px,#000f99 77px,#370099 160px,#909 295px,#990073 361px)"></div><div style="top:291px;left:99px;width:357px;height:3px;background:linear-gradient(90deg,#001c99 0px,#000f99 76px,#340099 155px,#909 296px,#990076 356px)"></div><div style="top:294px;left:101px;width:352px;height:3px;background:linear-gradient(90deg,#001b99 0px,#000e99 74px,#320099 151px,#909 297px,#990079 351px)"></div><div style="top:297px;left:103px;width:347px;height:3px;background:linear-gradient(90deg,#001999 0px,#000d99 73px,#2f0099 146px,#909 298px,#99007c 346px)"></div><div style="top:300px;left:105px;width:342px;height:3px;background:linear-gradient(90deg,#001899 0px,#000c99 71px,#2c0099 141px,#909 299px,#99007f 341px)"></div><div style="top:303px;left:107px;width:337px;height:3px;background:linear-gradient(90deg,#001799 0px,#000b99 70px,#290099 136px,#909 300px,#990083 336px)"></div><div style="top:306px;left:108px;width:334px;height:3px;background:linear-gradient(90deg,#001699 0px,#000b99 69px,#270099 132px,#909 302px,#990086 333px)"></div><div style="top:309px;left:110px;width:329px;height:3px;background:linear-gradient(90deg,#001599 0px,#000a99 68px,#240099 127px,#909 303px,#990089 328px)"></div><div style="top:312px;left:112px;width:324px;height:3px;background:linear-gradient(90deg,#001499 0px,#000999 66px,#209 122px,#980099 303px,#99008d 323px)"></div><div style="top:315px;left:114px;width:319px;height:3px;background:linear-gradient(90deg,#001399 0px,#000999 65px,#1f0099 117px,#980099 304px,#990091 318px)"></div><div style="top:318px;left:116px;width:314px;height:3px;background:linear-gradient(90deg,#001299 0px,#000899 63px,#1d0099 112px,#980099 305px,#990095 313px)"></div><div style="top:321px;left:118px;width:309px;height:3px;background:linear-gradient(90deg,#019 0px,#000799 62px,#1b0099 108px,#909 308px)"></div><div style="top:324px;left:120px;width:304px;height:3px;background:linear-gradient(90deg,#001099 0px,#000799 60px,#190099 103px,#950099 303px)"></div><div style="top:327px;left:122px;width:299px;height:3px;background:linear-gradient(90deg,#000f99 0px,#000699 59px,#160099 98px,#910099 298px)"></div><div style="top:330px;left:124px;width:294px;height:3px;background:linear-gradient(90deg,#000e99 0px,#000699 57px,#140099 93px,#8e0099 293px)"></div><div style="top:333px;left:126px;width:289px;height:3px;background:linear-gradient(90deg,#000e99 0px,#000599 56px,#120099 88px,#8a0099 288px)"></div><div style="top:336px;left:128px;width:284px;height:3px;background:linear-gradient(90deg,#000d99 0px,#000499 54px,#100099 83px,#860099 283px)"></div><div style="top:339px;left:130px;width:279px;height:3px;background:linear-gradient(90deg,#000c99 0px,#000499 53px,#830099 278px)"></div><div style="top:342px;left:133px;width:274px;height:3px;background:linear-gradient(90deg,#000b99 0px,#000399 50px,#800099 273px)"></div><div style="top:345px;left:135px;width:269px;height:3px;background:linear-gradient(90deg,#000a99 0px,#000399 49px,#7c0099 268px)"></div><div style="top:348px;left:137px;width:264px;height:3px;background:linear-gradient(90deg,#000999 0px,#000299 47px,#790099 263px)"></div><div style="top:351px;left:139px;width:259px;height:3px;background:linear-gradient(90deg,#000899 0px,#000299 46px,#760099 258px)"></div><div style="top:354px;left:141px;width:254px;height:3px;background:linear-gradient(90deg,#000899 0px,#000199 44px,#720099 253px)"></div><div style="top:357px;left:143px;width:249px;height:3px;background:linear-gradient(90deg,#000799 0px,#009 43px,#6f0099 248px)"></div><div style="top:360px;left:146px;width:243px;height:3px;background:linear-gradient(90deg,#000699 0px,#009 40px,#6c0099 242px)"></div><div style="top:363px;left:148px;width:238px;height:3px;background:linear-gradient(90deg,#000599 0px,#009 39px,#690099 237px)"></div><div style="top:366px;left:150px;width:233px;height:3px;background:linear-gradient(90deg,#000499 0px,#009 37px,#609 232px)"></div><div style="top:369px;left:153px;width:227px;height:3px;background:linear-gradient(90deg,#000399 0px,#009 35px,#640099 226px)"></div><div style="top:372px;left:155px;width:222px;height:3px;background:linear-gradient(90deg,#000399 0px,#009 33px,#610099 221px)"></div><div style="top:375px;left:157px;width:217px;height:3px;background:linear-gradient(90deg,#000299 0px,#009 32px,#5e0099 216px)"></div><div style="top:378px;left:160px;width:212px;height:3px;background:linear-gradient(90deg,#000199 0px,#009 29px,#5c0099 211px)"></div><div style="top:381px;left:162px;width:207px;height:3px;background:linear-gradient(90deg,#000199 0px,#009 28px,#590099 206px)"></div><div style="top:384px;left:165px;width:201px;height:3px;background:linear-gradient(90deg,#009 0px,#009 25px,#570099 200px)"></div><div style="top:387px;left:167px;width:196px;height:3px;background:linear-gradient(90deg,#009 0px,#009 24px,#540099 195px)"></div><div style="top:390px;left:170px;width:190px;height:3px;background:linear-gradient(90deg,#009 0px,#009 21px,#510099 189px)"></div><div style="top:393px;left:172px;width:185px;height:3px;background:linear-gradient(90deg,#009 0px,#009 20px,#4f0099 184px)"></div><div style="top:396px;left:175px;width:179px;height:3px;background:linear-gradient(90deg,#009 0px,#009 17px,#4d0099 178px)"></div><div style="top:399px;left:177px;width:174px;height:3px;background:linear-gradient(90deg,#009 0px,#009 16px,#4a0099 173px)"></div><div style="top:402px;left:180px;width:168px;height:3px;background:linear-gradient(90deg,#009 0px,#009 13px,#480099 167px)"></div><div style="top:405px;left:183px;width:162px;height:3px;background:linear-gradient(90deg,#009 0px,#009 11px,#460099 161px)"></div><div style="top:408px;left:186px;width:156px;height:3px;background:linear-gradient(90deg,#009 0px,#430099 155px)"></div><div style="top:411px;left:189px;width:150px;height:3px;background:linear-gradient(90deg,#009 0px,#410099 149px)"></div><div style="top:414px;left:192px;width:145px;height:3px;background:linear-gradient(90deg,#009 0px,#400099 144px)"></div><div style="top:417px;left:195px;width:139px;height:3px;background:linear-gradient(90deg,#009 0px,#3d0099 138px)"></div><div style="top:420px;left:198px;width:133px;height:3px;background:linear-gradient(90deg,#010099 0px,#3b0099 132px)"></div><div style="top:423px;left:201px;width:127px;height:3px;background:linear-gradient(90deg,#020099 0px,#390099 126px)"></div><div style="top:426px;left:205px;width:120px;height:3px;background:linear-gradient(90deg,#040099 0px,#370099 119px)"></div><div style="top:429px;left:208px;width:114px;height:3px;background:linear-gradient(90deg,#050099 0px,#350099 113px)"></div><div style="top:432px;left:211px;width:108px;height:3px;background:linear-gradient(90deg,#060099 0px,#309 107px)"></div><div style="top:435px;left:215px;width:101px;height:3px;background:linear-gradient(90deg,#070099 0px,#310099 100px)"></div><div style="top:438px;left:218px;width:95px;height:3px;background:linear-gradient(90deg,#080099 0px,#300099 94px)"></div><div style="top:441px;left:222px;width:88px;height:3px;background:linear-gradient(90deg,#090099 0px,#2e0099 87px)"></div><div style="top:444px;left:226px;width:81px;height:3px;background:linear-gradient(90deg,#0b0099 0px,#2c0099 80px)"></div><div style="top:447px;left:229px;width:76px;height:3px;background:linear-gradient(90deg,#0c0099 0px,#2b0099 75px)"></div><div style="top:450px;left:233px;width:69px;height:3px;background:linear-gradient(90deg,#0d0099 0px,#290099 68px)"></div><div style="top:453px;left:236px;width:63px;height:3px;background:linear-gradient(90deg,#0e0099 0px,#270099 62px)"></div><div style="top:456px;left:240px;width:56px;height:3px;background:linear-gradient(90deg,#0f0099 0px,#250099 55px)"></div><div style="top:459px;left:244px;width:49px;height:3px;background:linear-gradient(90deg,#109 0px,#240099 48px)"></div><div style="top:462px;left:247px;width:43px;height:3px;background:linear-gradient(90deg,#109 0px,#209 42px)"></div><div style="top:465px;left:251px;width:36px;height:3px;background:linear-gradient(90deg,#130099 0px,#200099 35px)"></div><div style="top:468px;left:254px;width:30px;height:3px;background:linear-gradient(90deg,#130099 0px,#1f0099 29px)"></div><div style="top:471px;left:258px;width:23px;height:3px;background:linear-gradient(90deg,#150099 0px,#1d0099 22px)"></div><div style="top:474px;left:262px;width:16px;height:3px;background:linear-gradient(90deg,#160099 0px,#1c0099 15px)"></div><div style="top:477px;left:266px;width:9px;height:3px;background:linear-gradient(90deg,#170099 0px,#1a0099 8px)"></div></div>
<div class="cl" style="clip-path:polygon(479.3px 63.1px,132.8px 30.6px,186.4px 362.0px)"><div style="top:30px;left:131px;width:13px;height:2px;background:linear-gradient(90deg,#00ff01 0px,#1aff00 12px)"></div><div style="top:32px;left:131px;width:35px;height:2px;background:linear-gradient(90deg,#00ff05 0px,#12ff04 9px,#53ff00 34px)"></div><div style="top:34px;left:131px;width:56px;height:2px;background:linear-gradient(90deg,#00ff0a 0px,#00ff0a 2px,#35ff05 23px,#92ff00 55px)"></div><div style="top:36px;left:132px;width:76px;height:2px;background:linear-gradient(90deg,#00ff0e 0px,#1dff0c 13px,#5eff07 37px,#9cff03 57px,#dbff00 75px)"></div><div style="top:38px;left:132px;width:98px;height:2px;background:linear-gradient(90deg,#00ff13 0px,#01ff12 2px,#24ff10 16px,#6dff0b 42px,#b4ff06 64px,#feff02 84px,#ffd300 97px)"></div><div style="top:40px;left:132px;width:119px;height:2px;background:linear-gradient(90deg,#00ff17 0px,#00ff17 2px,#1eff15 14px,#6cff10 42px,#b4ff0c 64px,#ffff07 84px,#ffc903 100px,#ff9f00 118px)"></div><div style="top:42px;left:133px;width:139px;height:2px;background:linear-gradient(90deg,#00ff1c 0px,#28ff19 17px,#6fff15 42px,#b1ff12 62px,#fffe0d 83px,#ffd709 94px,#ffb405 107px,#ff9402 122px,#ff7a00 138px)"></div><div style="top:44px;left:133px;width:161px;height:2px;background:linear-gradient(90deg,#00ff20 0px,#01ff20 2px,#22ff1e 15px,#6cff1b 41px,#aeff17 61px,#fffe13 83px,#ffcb0d 98px,#ffa107 115px,#ff7d03 136px,#ff5f00 160px)"></div><div style="top:46px;left:133px;width:182px;height:2px;background:linear-gradient(90deg,#00ff25 0px,#00ff25 2px,#1cff24 13px,#69ff20 40px,#aaff1d 60px,#fffd19 83px,#ffc110 101px,#ff930a 122px,#ff6a04 149px,#ff4a00 181px)"></div><div style="top:48px;left:134px;width:203px;height:2px;background:linear-gradient(90deg,#00ff2a 0px,#29ff28 17px,#6fff25 41px,#b5ff22 62px,#feff20 81px,#ffbb14 102px,#ff860c 128px,#ff5b05 161px,#ff3900 202px)"></div><div style="top:50px;left:134px;width:224px;height:2px;background:linear-gradient(90deg,#00ff2f 0px,#01ff2e 2px,#23ff2d 15px,#6eff2b 41px,#b5ff28 62px,#ffff26 81px,#ffd71e 92px,#ffb518 104px,#ff9713 118px,#ff7c0e 134px,#ff4f06 173px,#ff2c00 223px)"></div><div style="top:52px;left:134px;width:245px;height:2px;background:linear-gradient(90deg,#00ff34 0px,#0f3 2px,#1dff33 13px,#6bff30 40px,#b2ff2e 61px,#ffff2c 81px,#ffd323 93px,#ffb01c 106px,#ff8f15 122px,#ff7210 140px,#ff4406 185px,#f20 244px)"></div><div style="top:54px;left:135px;width:266px;height:2px;background:linear-gradient(90deg,#00ff38 0px,#27ff37 16px,#6eff36 40px,#aeff34 59px,#fffe32 80px,#ffcf28 93px,#ffa81f 108px,#ff8718 125px,#ff6a11 145px,#ff500c 169px,#ff3b07 196px,#ff1800 265px)"></div><div style="top:56px;left:135px;width:287px;height:2px;background:linear-gradient(90deg,#00ff3d 0px,#21ff3d 14px,#6bff3b 39px,#abff3a 58px,#fffd38 80px,#ffcc2c 94px,#ffa323 110px,#ff7f1a 129px,#ff6213 151px,#ff480d 177px,#ff3308 208px,#ff1000 286px)"></div><div style="top:58px;left:135px;width:308px;height:2px;background:linear-gradient(90deg,#00ff43 0px,#00ff42 2px,#1bff42 12px,#67ff41 38px,#a8ff40 57px,#fffc3f 80px,#ffc831 95px,#ff9e26 112px,#ff7a1d 132px,#ff5c15 156px,#ff410e 185px,#ff2c08 219px,#ff0a00 307px)"></div><div style="top:60px;left:136px;width:329px;height:2px;background:linear-gradient(90deg,#00ff48 0px,#28ff47 16px,#71ff47 40px,#b7ff46 60px,#feff46 78px,#ffc736 94px,#ff9b2a 112px,#ff751f 134px,#ff5616 160px,#ff3c0f 191px,#ff2509 229px,#ff0400 328px)"></div><div style="top:62px;left:136px;width:345px;height:2px;background:linear-gradient(90deg,#00ff4d 0px,#22ff4d 14px,#6dff4d 39px,#b3ff4d 59px,#ffff4d 78px,#ffc63c 94px,#ff982e 113px,#ff7122 136px,#ff5219 163px,#ff3710 197px,#ff210a 237px,#f00 344px)"></div><div style="top:64px;left:136px;width:344px;height:2px;background:linear-gradient(90deg,#00ff52 0px,#00ff52 2px,#1bff52 12px,#6aff53 38px,#afff53 58px,#fffe53 78px,#ffc541 94px,#ff9732 113px,#ff7026 136px,#ff511c 163px,#ff3613 197px,#ff210c 237px,#ff0001 343px)"></div><div style="top:66px;left:137px;width:341px;height:2px;background:linear-gradient(90deg,#00ff57 0px,#26ff58 15px,#6dff59 38px,#acff5a 56px,#fffd5a 77px,#ffc446 93px,#ff9636 112px,#ff7029 135px,#ff501f 162px,#ff3616 195px,#ff200e 235px,#ff0003 340px)"></div><div style="top:68px;left:137px;width:339px;height:2px;background:linear-gradient(90deg,#00ff5d 0px,#20ff5d 13px,#69ff5f 37px,#a8ff60 55px,#fffc61 77px,#ffc64d 92px,#ff973c 111px,#ff702d 134px,#ff5122 161px,#ff3618 194px,#ff2010 234px,#ff0004 338px)"></div><div style="top:70px;left:137px;width:337px;height:2px;background:linear-gradient(90deg,#00ff62 0px,#01ff62 2px,#19ff63 11px,#65ff65 36px,#a5ff66 54px,#fffb67 77px,#ffc552 92px,#ff9640 111px,#ff7132 133px,#ff5125 160px,#ff361b 193px,#ff2113 232px,#ff0006 336px)"></div><div style="top:72px;left:138px;width:334px;height:2px;background:linear-gradient(90deg,#00ff68 0px,#27ff69 15px,#6fff6b 38px,#b4ff6e 57px,#ffff70 75px,#ffc859 90px,#ff9746 109px,#ff7136 131px,#ff5129 158px,#ff361e 191px,#ff2015 230px,#ff0008 333px)"></div><div style="top:74px;left:138px;width:332px;height:2px;background:linear-gradient(90deg,#00ff6e 0px,#02ff6e 2px,#23ff6f 14px,#6cff72 37px,#b1ff74 56px,#fffe77 75px,#ffc75f 90px,#ff994b 108px,#ff723a 130px,#ff512c 157px,#ff3721 189px,#ff2118 228px,#ff0009 331px)"></div><div style="top:76px;left:138px;width:330px;height:2px;background:linear-gradient(90deg,#00ff73 0px,#01ff73 2px,#1dff75 12px,#68ff78 36px,#adff7b 55px,#fffd7e 75px,#ffc665 90px,#ff9850 108px,#ff713e 130px,#ff5130 157px,#ff3624 189px,#ff201a 228px,#ff000b 329px)"></div><div style="top:78px;left:139px;width:327px;height:2px;background:linear-gradient(90deg,#00ff79 0px,#25ff7b 14px,#6bff7f 36px,#a9ff82 53px,#fffc85 74px,#ffc56a 89px,#ff9755 107px,#ff7042 129px,#ff5133 155px,#ff3627 187px,#ff211c 225px,#ff000d 326px)"></div><div style="top:80px;left:139px;width:325px;height:2px;background:linear-gradient(90deg,#00ff7f 0px,#1eff81 12px,#67ff85 35px,#a5ff89 52px,#fffc8c 74px,#ffc470 89px,#ff9659 107px,#ff6f46 129px,#ff5036 155px,#ff3629 187px,#ff201e 225px,#ff000e 324px)"></div><div style="top:82px;left:139px;width:323px;height:2px;background:linear-gradient(90deg,#00ff85 0px,#01ff85 2px,#1dff87 12px,#6bff8c 36px,#b1ff90 55px,#ffff95 73px,#ffc678 88px,#ff975f 106px,#ff724c 127px,#ff513b 153px,#ff372d 184px,#ff2121 222px,#ff0010 322px)"></div><div style="top:84px;left:139px;width:321px;height:2px;background:linear-gradient(90deg,#00ff8b 0px,#00ff8b 2px,#17ff8d 10px,#67ff93 35px,#aeff98 54px,#fffe9d 73px,#ffc57e 88px,#ff9865 105px,#ff7250 126px,#ff523f 152px,#ff3730 183px,#ff2124 221px,#ff0012 320px)"></div><div style="top:86px;left:140px;width:318px;height:2px;background:linear-gradient(90deg,#00ff91 0px,#22ff94 13px,#6aff9a 35px,#aeff9f 53px,#fffea4 72px,#ffc484 87px,#ff986a 104px,#ff7154 125px,#ff5142 151px,#ff3633 182px,#ff2126 219px,#ff0014 317px)"></div><div style="top:88px;left:140px;width:316px;height:2px;background:linear-gradient(90deg,#00ff97 0px,#01ff98 2px,#1bff9a 11px,#6affa1 35px,#aaffa6 52px,#fffdac 72px,#ffc38a 87px,#ff976f 104px,#ff7058 125px,#ff5146 150px,#ff3636 181px,#ff2029 218px,#ff0015 315px)"></div><div style="top:90px;left:140px;width:314px;height:2px;background:linear-gradient(90deg,#00ff9e 0px,#00ff9e 2px,#14ffa0 9px,#66ffa7 34px,#a6ffad 51px,#fffcb3 72px,#ffc692 86px,#ff9674 104px,#ff705d 125px,#ff5049 150px,#ff3639 180px,#ff202b 217px,#ff0017 313px)"></div><div style="top:92px;left:141px;width:311px;height:2px;background:linear-gradient(90deg,#00ffa4 0px,#23ffa8 13px,#6dffaf 35px,#b3ffb6 53px,#feffbe 70px,#ffc598 85px,#ff977b 102px,#ff7263 122px,#ff524e 147px,#ff373d 177px,#ff212e 214px,#ff0019 310px)"></div><div style="top:94px;left:141px;width:309px;height:2px;background:linear-gradient(90deg,#00ffab 0px,#01ffab 2px,#1fffae 12px,#6cffb7 35px,#b3ffbe 53px,#ffffc6 70px,#ffc7a1 84px,#ff9881 101px,#ff7268 121px,#ff5252 146px,#ff3740 176px,#ff2131 212px,#ff001b 308px)"></div><div style="top:96px;left:141px;width:308px;height:2px;background:linear-gradient(90deg,#00ffb1 0px,#00ffb2 2px,#18ffb4 10px,#69ffbe 34px,#afffc6 52px,#fffece 70px,#ffc6a7 84px,#ff9786 101px,#ff726c 121px,#ff5156 146px,#ff3643 176px,#ff2034 212px,#ff001d 307px)"></div><div style="top:98px;left:142px;width:305px;height:2px;background:linear-gradient(90deg,#00ffb8 0px,#21ffbc 12px,#6cffc6 34px,#abffcd 50px,#fffdd6 69px,#ffc5ad 83px,#ff968c 100px,#ff7170 120px,#ff5059 145px,#ff3646 175px,#ff2036 211px,#ff001f 304px)"></div><div style="top:100px;left:142px;width:303px;height:2px;background:linear-gradient(90deg,#00ffbf 0px,#01ffbf 2px,#19ffc3 10px,#68ffcd 33px,#a7ffd5 49px,#fffcde 69px,#ffc4b4 83px,#ff9591 100px,#ff7075 120px,#ff505d 144px,#ff364a 173px,#ff2039 209px,#ff0021 302px)"></div><div style="top:102px;left:142px;width:301px;height:2px;background:linear-gradient(90deg,#00ffc5 0px,#00ffc6 2px,#12ffc9 8px,#64ffd4 32px,#a3ffdd 48px,#feffe9 68px,#fffbe6 69px,#ffc3bb 83px,#ff9798 99px,#ff707a 119px,#ff5162 143px,#ff364d 172px,#ff203c 208px,#ff0023 300px)"></div><div style="top:104px;left:143px;width:298px;height:2px;background:linear-gradient(90deg,#00ffcd 0px,#02ffce 2px,#25ffd3 13px,#6fffdd 34px,#b4ffe7 51px,#fffff2 67px,#ffc5c4 81px,#ff989f 97px,#ff7180 117px,#ff5166 141px,#ff3651 170px,#ff203f 205px,#ff0025 297px)"></div><div style="top:106px;left:143px;width:296px;height:2px;background:linear-gradient(90deg,#00ffd4 0px,#01ffd5 2px,#1dffd9 11px,#6bffe5 33px,#b0ffef 50px,#fffefb 67px,#ffc4cb 81px,#ff97a5 97px,#ff7085 117px,#ff516b 140px,#ff3654 169px,#ff2042 204px,#ff0027 295px)"></div><div style="top:108px;left:143px;width:294px;height:2px;background:linear-gradient(90deg,#00ffdb 0px,#00ffdc 2px,#09ffdd 5px,#58ffea 28px,#cbfffd 56px,#fbf9ff 67px,#fff3fb 69px,#ffbdcc 83px,#ff91a7 99px,#ff6c86 119px,#ff4e6d 142px,#ff3456 171px,#ff1f44 205px,#ff0029 293px)"></div><div style="top:110px;left:144px;width:291px;height:2px;background:linear-gradient(90deg,#00ffe3 0px,#02ffe4 2px,#3affed 19px,#97fffd 43px,#fbeeff 68px,#ffe9fb 70px,#ffb5cd 84px,#ff8ca8 100px,#ff6a89 119px,#ff4c6f 142px,#ff3359 170px,#ff1e46 204px,#ff002b 290px)"></div><div style="top:112px;left:144px;width:289px;height:2px;background:linear-gradient(90deg,#00ffea 0px,#01ffeb 2px,#25fff1 13px,#7dfdff 37px,#fbe4ff 70px,#ffe0fb 72px,#ffaece 86px,#ff87aa 102px,#ff668b 121px,#ff4971 144px,#ff325b 171px,#ff1e49 204px,#ff002d 288px)"></div><div style="top:114px;left:144px;width:287px;height:2px;background:linear-gradient(90deg,#00fff1 0px,#00fff2 2px,#4efdff 25px,#ffd6fb 74px,#ffaad2 87px,#ff84ad 103px,#ff638e 122px,#ff4774 145px,#ff305e 172px,#ff1d4b 204px,#ff002f 286px)"></div><div style="top:116px;left:145px;width:284px;height:2px;background:linear-gradient(90deg,#00fff9 0px,#02fffb 2px,#4ff4ff 25px,#ffcdfb 75px,#ffa1d0 89px,#ff7dac 105px,#ff5e8e 124px,#ff4575 146px,#ff1c4d 204px,#ff0031 283px)"></div><div style="top:118px;left:145px;width:282px;height:2px;background:linear-gradient(90deg,#00fdff 0px,#01fcff 2px,#4cedff 25px,#ffc5fc 77px,#ff9dd3 90px,#ff7ab0 106px,#ff5c91 125px,#ff4378 147px,#ff1b50 204px,#ff0034 281px)"></div><div style="top:120px;left:145px;width:280px;height:2px;background:linear-gradient(90deg,#00f6ff 0px,#00f4ff 2px,#46e6ff 24px,#ffbdfc 79px,#ff97d4 92px,#ff75b1 108px,#ff5a94 126px,#ff417a 148px,#ff1b53 203px,#ff0036 279px)"></div><div style="top:122px;left:146px;width:277px;height:2px;background:linear-gradient(90deg,#0ef 0px,#02edff 2px,#53dcff 28px,#ffb5fc 80px,#ff91d5 93px,#ff71b2 109px,#ff5695 127px,#ff3f7d 148px,#ff1a55 202px,#ff0038 276px)"></div><div style="top:124px;left:146px;width:275px;height:2px;background:linear-gradient(90deg,#00e7ff 0px,#01e6ff 2px,#50d5ff 28px,#ffaefc 82px,#ff8bd6 95px,#ff6cb3 111px,#ff5397 129px,#ff3d7e 150px,#ff1957 203px,#ff003b 274px)"></div><div style="top:126px;left:146px;width:273px;height:2px;background:linear-gradient(90deg,#00e1ff 0px,#00dfff 2px,#4ad0ff 27px,#ffa7fc 84px,#ff86d7 97px,#ff68b4 113px,#ff4f98 131px,#ff3b81 151px,#ff195a 203px,#ff003d 272px)"></div><div style="top:128px;left:147px;width:270px;height:2px;background:linear-gradient(90deg,#00daff 0px,#57c6ff 31px,#ffa0fc 85px,#ff81d7 98px,#ff65b7 113px,#ff4d9b 131px,#ff3983 151px,#ff185d 201px,#ff0040 269px)"></div><div style="top:130px;left:147px;width:268px;height:2px;background:linear-gradient(90deg,#00d4ff 0px,#01d3ff 2px,#54c1ff 31px,#ff99fc 87px,#ff7bd8 100px,#ff61b8 115px,#ff4b9e 132px,#ff3786 152px,#ff185f 201px,#ff0042 267px)"></div><div style="top:132px;left:147px;width:266px;height:2px;background:linear-gradient(90deg,#00ceff 0px,#00cdff 2px,#4fbcff 30px,#ff93fc 89px,#ff76d9 102px,#ff5dba 117px,#ff3688 153px,#ff1762 201px,#ff0045 265px)"></div><div style="top:134px;left:148px;width:263px;height:2px;background:linear-gradient(90deg,#00c8ff 0px,#5ab3ff 34px,#ff8dfc 90px,#ff72d9 103px,#ff5bbc 117px,#ff348a 153px,#ff1664 200px,#ff0047 262px)"></div><div style="top:136px;left:148px;width:261px;height:2px;background:linear-gradient(90deg,#00c3ff 0px,#01c2ff 2px,#55afff 33px,#ff87fc 92px,#ff6dda 105px,#ff57bd 119px,#ff328d 154px,#ff1667 200px,#ff004a 260px)"></div><div style="top:138px;left:148px;width:259px;height:2px;background:linear-gradient(90deg,#00beff 0px,#01bdff 2px,#52aaff 33px,#ff82fd 94px,#ff69db 107px,#ff54be 121px,#ff318f 155px,#ff156a 200px,#ff004d 258px)"></div><div style="top:140px;left:149px;width:256px;height:2px;background:linear-gradient(90deg,#00b8ff 0px,#5da2ff 37px,#ff7cfd 95px,#ff64db 108px,#ff50bf 122px,#ff2e90 156px,#ff146c 199px,#ff004f 255px)"></div><div style="top:142px;left:149px;width:254px;height:2px;background:linear-gradient(90deg,#00b3ff 0px,#01b2ff 2px,#589fff 36px,#ff77fd 97px,#ff61de 109px,#ff4ec2 123px,#ff2d94 156px,#ff146f 199px,#ff0052 253px)"></div><div style="top:144px;left:149px;width:253px;height:2px;background:linear-gradient(90deg,#00afff 0px,#01aeff 2px,#5d99ff 39px,#fe73ff 98px,#ff4ac3 125px,#ff2c96 157px,#ff1371 199px,#f05 252px)"></div><div style="top:146px;left:150px;width:250px;height:2px;background:linear-gradient(90deg,#0af 0px,#6a91ff 44px,#fe6eff 99px,#ff48c5 125px,#ff2a98 157px,#ff1274 198px,#ff0058 249px)"></div><div style="top:148px;left:150px;width:248px;height:2px;background:linear-gradient(90deg,#00a6ff 0px,#658dff 43px,#fe6aff 101px,#ff45c6 127px,#ff299a 158px,#f17 198px,#ff005a 247px)"></div><div style="top:150px;left:150px;width:246px;height:2px;background:linear-gradient(90deg,#00a2ff 0px,#01a1ff 2px,#608aff 42px,#fe65ff 103px,#ff42c7 129px,#ff279d 159px,#ff117a 197px,#ff005d 245px)"></div><div style="top:152px;left:150px;width:244px;height:2px;background:linear-gradient(90deg,#009eff 0px,#029cff 3px,#5b87ff 41px,#fe61ff 105px,#ff40c9 130px,#ff269f 160px,#ff107d 197px,#ff0060 243px)"></div><div style="top:154px;left:151px;width:241px;height:2px;background:linear-gradient(90deg,#09f 0px,#6780ff 46px,#fe5cff 106px,#ff3dca 131px,#ff24a1 160px,#ff107f 196px,#ff0064 240px)"></div><div style="top:156px;left:151px;width:239px;height:2px;background:linear-gradient(90deg,#0096ff 0px,#0195ff 2px,#627dff 45px,#fe58ff 108px,#ff3acb 133px,#ff23a3 161px,#ff0f82 196px,#ff0067 238px)"></div><div style="top:158px;left:151px;width:237px;height:2px;background:linear-gradient(90deg,#0092ff 0px,#0290ff 3px,#5e7bff 44px,#fe54ff 110px,#ff38cd 134px,#ff21a5 162px,#ff0f85 195px,#ff006a 236px)"></div><div style="top:160px;left:152px;width:234px;height:2px;background:linear-gradient(90deg,#008eff 0px,#6775ff 48px,#fe50ff 111px,#ff36d0 134px,#ff20a9 161px,#ff0e88 194px,#ff006d 233px)"></div><div style="top:162px;left:152px;width:232px;height:2px;background:linear-gradient(90deg,#008bff 0px,#018aff 2px,#6571ff 48px,#fe4cff 113px,#ff33d0 136px,#ff1fab 162px,#ff0e8c 193px,#ff0071 231px)"></div><div style="top:164px;left:152px;width:230px;height:2px;background:linear-gradient(90deg,#0087ff 0px,#0286ff 3px,#606fff 47px,#fe49ff 115px,#ff30d1 138px,#ff1dad 163px,#ff0d8e 193px,#ff0074 229px)"></div><div style="top:166px;left:153px;width:227px;height:2px;background:linear-gradient(90deg,#0084ff 0px,#6969ff 51px,#fe45ff 116px,#ff2ed3 138px,#ff1cb0 162px,#ff0d92 191px,#ff0078 226px)"></div><div style="top:168px;left:153px;width:225px;height:2px;background:linear-gradient(90deg,#0081ff 0px,#6767ff 51px,#fe42ff 118px,#ff2cd4 140px,#ff1bb2 163px,#ff0c95 191px,#ff007b 224px)"></div><div style="top:170px;left:153px;width:223px;height:2px;background:linear-gradient(90deg,#007eff 0px,#027cff 3px,#6265ff 50px,#fe3eff 120px,#ff2ad6 141px,#ff19b4 164px,#ff0b97 191px,#ff007f 222px)"></div><div style="top:172px;left:154px;width:220px;height:2px;background:linear-gradient(90deg,#007aff 0px,#6b5fff 54px,#fe3bff 121px,#ff28d8 141px,#ff19b8 163px,#ff0b9b 189px,#ff0083 219px)"></div><div style="top:174px;left:154px;width:218px;height:2px;background:linear-gradient(90deg,#0078ff 0px,#665dff 53px,#fe38ff 123px,#ff26d8 143px,#ff17ba 164px,#ff0a9e 189px,#ff0086 217px)"></div><div style="top:176px;left:154px;width:216px;height:2px;background:linear-gradient(90deg,#0075ff 0px,#0273ff 3px,#645bff 53px,#fe35ff 125px,#ff23d9 145px,#ff16bc 165px,#ff008a 215px)"></div><div style="top:178px;left:155px;width:213px;height:2px;background:linear-gradient(90deg,#0072ff 0px,#6c56ff 57px,#fe31ff 126px,#ff21db 145px,#ff15bf 164px,#ff008e 212px)"></div><div style="top:180px;left:155px;width:211px;height:2px;background:linear-gradient(90deg,#006fff 0px,#6854ff 56px,#fe2fff 128px,#ff20dd 146px,#ff13c1 165px,#ff0092 210px)"></div><div style="top:182px;left:155px;width:209px;height:2px;background:linear-gradient(90deg,#006dff 0px,#026bff 3px,#6452ff 55px,#fe2cff 130px,#ff13c4 165px,#ff0097 208px)"></div><div style="top:184px;left:156px;width:206px;height:2px;background:linear-gradient(90deg,#006aff 0px,#6e4dff 60px,#fe29ff 131px,#ff11c6 165px,#ff009b 205px)"></div><div style="top:186px;left:156px;width:204px;height:2px;background:linear-gradient(90deg,#0067ff 0px,#6a4cff 59px,#fe26ff 133px,#ff10c9 165px,#ff009f 203px)"></div><div style="top:188px;left:156px;width:202px;height:2px;background:linear-gradient(90deg,#0065ff 0px,#664aff 58px,#fe23ff 135px,#ff0fcb 166px,#ff00a4 201px)"></div><div style="top:190px;left:157px;width:199px;height:2px;background:linear-gradient(90deg,#0062ff 0px,#6d46ff 62px,#fe21ff 136px,#ff0ecf 165px,#ff00a8 198px)"></div><div style="top:192px;left:157px;width:197px;height:2px;background:linear-gradient(90deg,#0060ff 0px,#6b44ff 62px,#fe1eff 138px,#ff0dd2 165px,#ff00ad 196px)"></div><div style="top:194px;left:157px;width:196px;height:2px;background:linear-gradient(90deg,#005eff 0px,#6843ff 61px,#fe1cff 140px,#ff0cd4 166px,#ff00b1 195px)"></div><div style="top:196px;left:158px;width:193px;height:2px;background:linear-gradient(90deg,#005bff 0px,#6f3eff 65px,#fe19ff 141px,#ff0bd6 166px,#ff00b6 192px)"></div><div style="top:198px;left:158px;width:191px;height:2px;background:linear-gradient(90deg,#0059ff 0px,#6d3dff 65px,#fe17ff 143px,#ff0ad9 166px,#f0b 190px)"></div><div style="top:200px;left:158px;width:189px;height:2px;background:linear-gradient(90deg,#0057ff 0px,#693bff 64px,#fe15ff 145px,#ff09dc 166px,#ff00c0 188px)"></div><div style="top:202px;left:159px;width:186px;height:2px;background:linear-gradient(90deg,#05f 0px,#7037ff 68px,#fe13ff 146px,#ff00c5 185px)"></div><div style="top:204px;left:159px;width:184px;height:2px;background:linear-gradient(90deg,#0053ff 0px,#6c36ff 67px,#fe10ff 148px,#ff00ca 183px)"></div><div style="top:206px;left:159px;width:182px;height:2px;background:linear-gradient(90deg,#0051ff 0px,#6b35ff 67px,#fe0eff 150px,#ff00d0 181px)"></div><div style="top:208px;left:160px;width:179px;height:2px;background:linear-gradient(90deg,#004fff 0px,#7131ff 71px,#fe0cff 151px,#ff00d5 178px)"></div><div style="top:210px;left:160px;width:177px;height:2px;background:linear-gradient(90deg,#004dff 0px,#6e30ff 70px,#fe0aff 153px,#ff00db 176px)"></div><div style="top:212px;left:160px;width:175px;height:2px;background:linear-gradient(90deg,#004cff 0px,#6a2fff 69px,#fe08ff 155px,#ff00e1 174px)"></div><div style="top:214px;left:161px;width:172px;height:2px;background:linear-gradient(90deg,#004aff 0px,#722bff 74px,#fe06ff 156px,#ff00e7 171px)"></div><div style="top:216px;left:161px;width:170px;height:2px;background:linear-gradient(90deg,#0048ff 0px,#6f2aff 73px,#fe04ff 158px,#f0e 169px)"></div><div style="top:218px;left:161px;width:168px;height:2px;background:linear-gradient(90deg,#0046ff 0px,#6c29ff 72px,#fe02ff 160px,#ff00f4 167px)"></div><div style="top:220px;left:162px;width:165px;height:2px;background:linear-gradient(90deg,#04f 0px,#5c2cff 62px,#fe00ff 161px,#ff00fb 164px)"></div><div style="top:222px;left:162px;width:163px;height:2px;background:linear-gradient(90deg,#0043ff 0px,#6e25ff 75px,#fc00ff 162px)"></div><div style="top:224px;left:162px;width:161px;height:2px;background:linear-gradient(90deg,#0041ff 0px,#6825ff 72px,#f600ff 160px)"></div><div style="top:226px;left:162px;width:159px;height:2px;background:linear-gradient(90deg,#0040ff 0px,#6225ff 69px,#ef00ff 158px)"></div><div style="top:228px;left:163px;width:156px;height:2px;background:linear-gradient(90deg,#003eff 0px,#6522ff 71px,#e900ff 155px)"></div><div style="top:230px;left:163px;width:154px;height:2px;background:linear-gradient(90deg,#003dff 0px,#5e23ff 67px,#e200ff 153px)"></div><div style="top:232px;left:163px;width:152px;height:2px;background:linear-gradient(90deg,#003bff 0px,#5823ff 64px,#dc00ff 151px)"></div><div style="top:234px;left:164px;width:149px;height:2px;background:linear-gradient(90deg,#0039ff 0px,#5b21ff 66px,#d600ff 148px)"></div><div style="top:236px;left:164px;width:147px;height:2px;background:linear-gradient(90deg,#0038ff 0px,#5521ff 63px,#d000ff 146px)"></div><div style="top:238px;left:164px;width:145px;height:2px;background:linear-gradient(90deg,#0037ff 0px,#4e21ff 59px,#cb00ff 144px)"></div><div style="top:240px;left:165px;width:142px;height:2px;background:linear-gradient(90deg,#0035ff 0px,#531eff 62px,#c500ff 141px)"></div><div style="top:242px;left:165px;width:140px;height:2px;background:linear-gradient(90deg,#0034ff 0px,#4c1fff 58px,#c000ff 139px)"></div><div style="top:244px;left:165px;width:139px;height:2px;background:linear-gradient(90deg,#03f 0px,#461fff 55px,#bc00ff 138px)"></div><div style="top:246px;left:166px;width:136px;height:2px;background:linear-gradient(90deg,#0031ff 0px,#4b1cff 58px,#b700ff 135px)"></div><div style="top:248px;left:166px;width:134px;height:2px;background:linear-gradient(90deg,#0030ff 0px,#461cff 55px,#b200ff 133px)"></div><div style="top:250px;left:166px;width:132px;height:2px;background:linear-gradient(90deg,#002fff 0px,#3f1dff 51px,#ad00ff 131px)"></div><div style="top:252px;left:167px;width:129px;height:2px;background:linear-gradient(90deg,#002dff 0px,#a800ff 128px)"></div><div style="top:254px;left:167px;width:127px;height:2px;background:linear-gradient(90deg,#002cff 0px,#a300ff 126px)"></div><div style="top:256px;left:167px;width:125px;height:2px;background:linear-gradient(90deg,#002bff 0px,#9e00ff 124px)"></div><div style="top:258px;left:168px;width:122px;height:2px;background:linear-gradient(90deg,#002aff 0px,#9a00ff 121px)"></div><div style="top:260px;left:168px;width:120px;height:2px;background:linear-gradient(90deg,#0029ff 0px,#9500ff 119px)"></div><div style="top:262px;left:168px;width:118px;height:2px;background:linear-gradient(90deg,#0028ff 0px,#9100ff 117px)"></div><div style="top:264px;left:169px;width:115px;height:2px;background:linear-gradient(90deg,#0026ff 0px,#8c00ff 114px)"></div><div style="top:266px;left:169px;width:113px;height:2px;background:linear-gradient(90deg,#0025ff 0px,#80f 112px)"></div><div style="top:268px;left:169px;width:111px;height:2px;background:linear-gradient(90deg,#0024ff 0px,#8400ff 110px)"></div><div style="top:270px;left:170px;width:108px;height:2px;background:linear-gradient(90deg,#0023ff 0px,#8000ff 107px)"></div><div style="top:272px;left:170px;width:106px;height:2px;background:linear-gradient(90deg,#02f 0px,#7c00ff 105px)"></div><div style="top:274px;left:170px;width:104px;height:2px;background:linear-gradient(90deg,#0021ff 0px,#7800ff 103px)"></div><div style="top:276px;left:171px;width:101px;height:2px;background:linear-gradient(90deg,#0020ff 0px,#7400ff 100px)"></div><div style="top:278px;left:171px;width:99px;height:2px;background:linear-gradient(90deg,#001fff 0px,#7000ff 98px)"></div><div style="top:280px;left:171px;width:97px;height:2px;background:linear-gradient(90deg,#001eff 0px,#6d00ff 96px)"></div><div style="top:282px;left:172px;width:94px;height:2px;background:linear-gradient(90deg,#001dff 0px,#6900ff 93px)"></div><div style="top:284px;left:172px;width:92px;height:2px;background:linear-gradient(90deg,#001cff 0px,#6500ff 91px)"></div><div style="top:286px;left:172px;width:90px;height:2px;background:linear-gradient(90deg,#001bff 0px,#6200ff 89px)"></div><div style="top:288px;left:173px;width:87px;height:2px;background:linear-gradient(90deg,#001aff 0px,#5e00ff 86px)"></div><div style="top:290px;left:173px;width:85px;height:2px;background:linear-gradient(90deg,#0019ff 0px,#5b00ff 84px)"></div><div style="top:292px;left:173px;width:83px;height:2px;background:linear-gradient(90deg,#0019ff 0px,#5800ff 82px)"></div><div style="top:294px;left:173px;width:82px;height:2px;background:linear-gradient(90deg,#0018ff 0px,#50f 81px)"></div><div style="top:296px;left:174px;width:79px;height:2px;background:linear-gradient(90deg,#0017ff 0px,#5200ff 78px)"></div><div style="top:298px;left:174px;width:77px;height:2px;background:linear-gradient(90deg,#0016ff 0px,#4f00ff 76px)"></div><div style="top:300px;left:174px;width:75px;height:2px;background:linear-gradient(90deg,#0015ff 0px,#4c00ff 74px)"></div><div style="top:302px;left:175px;width:72px;height:2px;background:linear-gradient(90deg,#0014ff 0px,#4900ff 71px)"></div><div style="top:304px;left:175px;width:70px;height:2px;background:linear-gradient(90deg,#0014ff 0px,#4600ff 69px)"></div><div style="top:306px;left:175px;width:68px;height:2px;background:linear-gradient(90deg,#0013ff 0px,#4300ff 67px)"></div><div style="top:308px;left:176px;width:65px;height:2px;background:linear-gradient(90deg,#0012ff 0px,#4000ff 64px)"></div><div style="top:310px;left:176px;width:63px;height:2px;background:linear-gradient(90deg,#01f 0px,#3d00ff 62px)"></div><div style="top:312px;left:176px;width:61px;height:2px;background:linear-gradient(90deg,#0010ff 0px,#3a00ff 60px)"></div><div style="top:314px;left:177px;width:58px;height:2px;background:linear-gradient(90deg,#0010ff 0px,#3800ff 57px)"></div><div style="top:316px;left:177px;width:56px;height:2px;background:linear-gradient(90deg,#000fff 0px,#3500ff 55px)"></div><div style="top:318px;left:177px;width:54px;height:2px;background:linear-gradient(90deg,#000eff 0px,#3200ff 53px)"></div><div style="top:320px;left:178px;width:51px;height:2px;background:linear-gradient(90deg,#000dff 0px,#2f00ff 50px)"></div><div style="top:322px;left:178px;width:49px;height:2px;background:linear-gradient(90deg,#000dff 0px,#2d00ff 48px)"></div><div style="top:324px;left:178px;width:47px;height:2px;background:linear-gradient(90deg,#000cff 0px,#2a00ff 46px)"></div><div style="top:326px;left:179px;width:44px;height:2px;background:linear-gradient(90deg,#000bff 0px,#2800ff 43px)"></div><div style="top:328px;left:179px;width:42px;height:2px;background:linear-gradient(90deg,#000bff 0px,#2500ff 41px)"></div><div style="top:330px;left:179px;width:40px;height:2px;background:linear-gradient(90deg,#000aff 0px,#2300ff 39px)"></div><div style="top:332px;left:180px;width:37px;height:2px;background:linear-gradient(90deg,#0009ff 0px,#2000ff 36px)"></div><div style="top:334px;left:180px;width:35px;height:2px;background:linear-gradient(90deg,#0009ff 0px,#1e00ff 34px)"></div><div style="top:336px;left:180px;width:33px;height:2px;background:linear-gradient(90deg,#0008ff 0px,#1c00ff 32px)"></div><div style="top:338px;left:181px;width:30px;height:2px;background:linear-gradient(90deg,#0007ff 0px,#1900ff 29px)"></div><div style="top:340px;left:181px;width:28px;height:2px;background:linear-gradient(90deg,#0007ff 0px,#1700ff 27px)"></div><div style="top:342px;left:181px;width:27px;height:2px;background:linear-gradient(90deg,#0006ff 0px,#1600ff 26px)"></div><div style="top:344px;left:182px;width:24px;height:2px;background:linear-gradient(90deg,#0005ff 0px,#1300ff 23px)"></div><div style="top:346px;left:182px;width:22px;height:2px;background:linear-gradient(90deg,#0005ff 0px,#10f 21px)"></div><div style="top:348px;left:182px;width:20px;height:2px;background:linear-gradient(90deg,#0004ff 0px,#0f00ff 19px)"></div><div style="top:350px;left:183px;width:17px;height:2px;background:linear-gradient(90deg,#0003ff 0px,#0d00ff 16px)"></div><div style="top:352px;left:183px;width:15px;height:2px;background:linear-gradient(90deg,#0003ff 0px,#0b00ff 14px)"></div><div style="top:354px;left:183px;width:13px;height:2px;background:linear-gradient(90deg,#0002ff 0px,#0900ff 12px)"></div><div style="top:356px;left:184px;width:10px;height:2px;background:linear-gradient(90deg,#0002ff 0px,#0700ff 9px)"></div><div style="top:358px;left:184px;width:8px;height:2px;background:linear-gradient(90deg,#0001ff 0px,#0500ff 7px)"></div><div style="top:360px;left:184px;width:6px;height:2px;background:linear-gradient(90deg,#0001ff 0px,#0300ff 5px)"></div></div></div>
<div style="left:1013px;top:612.5px;width:6px;height:1.5px;background:#e0e0e0;"></div>
<span class="t" style="left:1005.01px;top:607.15px;font-size:14px;color:#dcdcdc;">0</span>
<div style="left:1019.05px;top:613px;width:1.5px;height:6px;background:#e0e0e0;"></div>
<span class="t" style="left:1015.86px;top:622.05px;font-size:14px;color:#dcdcdc;">0</span>
<div style="left:1013px;top:571.477px;width:6px;height:1.5px;background:#e0e0e0;"></div>
<span class="t" style="left:985.55px;top:566.13px;font-size:14px;color:#dcdcdc;">0,05</span>
<div style="left:1072.25px;top:613px;width:1.5px;height:6px;background:#e0e0e0;"></div>
<span class="t" style="left:1059.33px;top:622.05px;font-size:14px;color:#dcdcdc;">0,05</span>
<div style="left:1013px;top:530.455px;width:6px;height:1.5px;background:#e0e0e0;"></div>
<span class="t" style="left:993.34px;top:525.10px;font-size:14px;color:#dcdcdc;">0,1</span>
<div style="left:1125.45px;top:613px;width:1.5px;height:6px;background:#e0e0e0;"></div>
<span class="t" style="left:1116.42px;top:622.05px;font-size:14px;color:#dcdcdc;">0,1</span>
<div style="left:1013px;top:489.432px;width:6px;height:1.5px;background:#e0e0e0;"></div>
<span class="t" style="left:985.55px;top:484.08px;font-size:14px;color:#dcdcdc;">0,15</span>
<div style="left:1178.65px;top:613px;width:1.5px;height:6px;background:#e0e0e0;"></div>
<span class="t" style="left:1165.73px;top:622.05px;font-size:14px;color:#dcdcdc;">0,15</span>
<div style="left:1013px;top:448.409px;width:6px;height:1.5px;background:#e0e0e0;"></div>
<span class="t" style="left:993.34px;top:443.06px;font-size:14px;color:#dcdcdc;">0,2</span>
<div style="left:1231.85px;top:613px;width:1.5px;height:6px;background:#e0e0e0;"></div>
<span class="t" style="left:1222.82px;top:622.05px;font-size:14px;color:#dcdcdc;">0,2</span>
<div style="left:1013px;top:407.386px;width:6px;height:1.5px;background:#e0e0e0;"></div>
<span class="t" style="left:985.55px;top:402.04px;font-size:14px;color:#dcdcdc;">0,25</span>
<div style="left:1285.05px;top:613px;width:1.5px;height:6px;background:#e0e0e0;"></div>
<span class="t" style="left:1272.13px;top:622.05px;font-size:14px;color:#dcdcdc;">0,25</span>
<div style="left:1013px;top:366.364px;width:6px;height:1.5px;background:#e0e0e0;"></div>
<span class="t" style="left:993.34px;top:361.01px;font-size:14px;color:#dcdcdc;">0,3</span>
<div style="left:1338.25px;top:613px;width:1.5px;height:6px;background:#e0e0e0;"></div>
<span class="t" style="left:1329.22px;top:622.05px;font-size:14px;color:#dcdcdc;">0,3</span>
<div style="left:1013px;top:325.341px;width:6px;height:1.5px;background:#e0e0e0;"></div>
<span class="t" style="left:985.55px;top:319.99px;font-size:14px;color:#dcdcdc;">0,35</span>
<div style="left:1391.45px;top:613px;width:1.5px;height:6px;background:#e0e0e0;"></div>
<span class="t" style="left:1378.53px;top:622.05px;font-size:14px;color:#dcdcdc;">0,35</span>
<div style="left:1013px;top:284.318px;width:6px;height:1.5px;background:#e0e0e0;"></div>
<span class="t" style="left:993.34px;top:278.97px;font-size:14px;color:#dcdcdc;">0,4</span>
<div style="left:1444.65px;top:613px;width:1.5px;height:6px;background:#e0e0e0;"></div>
<span class="t" style="left:1435.62px;top:622.05px;font-size:14px;color:#dcdcdc;">0,4</span>
<div style="left:1013px;top:243.295px;width:6px;height:1.5px;background:#e0e0e0;"></div>
<span class="t" style="left:985.55px;top:237.94px;font-size:14px;color:#dcdcdc;">0,45</span>
<div style="left:1497.85px;top:613px;width:1.5px;height:6px;background:#e0e0e0;"></div>
<span class="t" style="left:1484.93px;top:622.05px;font-size:14px;color:#dcdcdc;">0,45</span>
<div style="left:1013px;top:202.273px;width:6px;height:1.5px;background:#e0e0e0;"></div>
<span class="t" style="left:993.34px;top:196.92px;font-size:14px;color:#dcdcdc;">0,5</span>
<div style="left:1551.05px;top:613px;width:1.5px;height:6px;background:#e0e0e0;"></div>
<span class="t" style="left:1542.02px;top:622.05px;font-size:14px;color:#dcdcdc;">0,5</span>
<div style="left:1013px;top:161.25px;width:6px;height:1.5px;background:#e0e0e0;"></div>
<span class="t" style="left:985.55px;top:155.90px;font-size:14px;color:#dcdcdc;">0,55</span>
<div style="left:1604.25px;top:613px;width:1.5px;height:6px;background:#e0e0e0;"></div>
<span class="t" style="left:1591.33px;top:622.05px;font-size:14px;color:#dcdcdc;">0,55</span>
<div style="left:1404.5px;top:580px;width:252px;height:27px;background:#343434;"></div>
<span class="t" style="left:1405.50px;top:585.89px;font-size:19.5px;color:#f0f0f0;white-space:pre;">Gamut Coverage:  100%</span>
<svg style="left:0;top:0" width="1670" height="660" viewBox="0 0 1670 660"><rect x="1146.0" y="144.1" width="13.4" height="13.4" fill="none" stroke="rgba(255,255,255,.88)" stroke-width="1.6"/><circle cx="1150.9" cy="149.2" r="4.3" fill="#00b400" stroke="#000" stroke-width="1.2"/><rect x="1230.0" y="152.0" width="13.4" height="13.4" fill="none" stroke="rgba(255,255,255,.88)" stroke-width="1.6"/><circle cx="1237.2" cy="160.3" r="4.3" fill="#b4b400" stroke="#000" stroke-width="1.2"/><rect x="1492.6" y="176.6" width="13.4" height="13.4" fill="none" stroke="rgba(255,255,255,.88)" stroke-width="1.6"/><circle cx="1510.6" cy="181.2" r="4.3" fill="#b40000" stroke="#000" stroke-width="1.2"/><rect x="1161.2" y="231.8" width="13.4" height="13.4" fill="none" stroke="rgba(255,255,255,.88)" stroke-width="1.6"/><circle cx="1166.2" cy="239.1" r="4.3" fill="#00b4b4" stroke="#000" stroke-width="1.2"/><rect x="1337.6" y="333.7" width="13.4" height="13.4" fill="none" stroke="rgba(255,255,255,.88)" stroke-width="1.6"/><circle cx="1347.8" cy="340.8" r="4.3" fill="#b400b4" stroke="#000" stroke-width="1.2"/><rect x="1199.7" y="475.5" width="13.4" height="13.4" fill="none" stroke="rgba(255,255,255,.88)" stroke-width="1.6"/><circle cx="1205.1" cy="481.4" r="4.3" fill="#0000b4" stroke="#000" stroke-width="1.2"/><rect x="1222.7" y="220.8" width="13.4" height="13.4" fill="none" stroke="#000" stroke-width="2"/><circle cx="1232.1" cy="227.5" r="4.3" fill="rgba(255,255,255,.1)" stroke="#000" stroke-width="1.2"/><circle cx="1229.5" cy="227.7" r="4.3" fill="#fff" stroke="#000" stroke-width="1.2"/></svg>
<span class="t" style="left:770.47px;top:660.95px;font-size:14px;color:#dcdcdc;">CIE 1931 xy</span>
<div style="left:638px;top:678px;width:342px;height:199px;overflow:hidden"><div class="cl" style="width:342px;height:199px"><div style="top:0px;left:0px;width:342px;height:3px;background:linear-gradient(90deg,#8cffd2 0px,#ffffce 266px,#ffdfb3 341px)"></div><div style="top:3px;left:0px;width:342px;height:3px;background:linear-gradient(90deg,#8dffd4 0px,#ffffcf 263px,#ffdeb3 341px)"></div><div style="top:6px;left:0px;width:342px;height:3px;background:linear-gradient(90deg,#8effd5 0px,#ffffd1 260px,#ffdcb3 341px)"></div><div style="top:9px;left:0px;width:342px;height:3px;background:linear-gradient(90deg,#8fffd6 0px,#ffffd2 257px,#ffdbb3 341px)"></div><div style="top:12px;left:0px;width:342px;height:3px;background:linear-gradient(90deg,#90ffd7 0px,#ffffd4 254px,#ffdab4 341px)"></div><div style="top:15px;left:0px;width:342px;height:3px;background:linear-gradient(90deg,#91ffd9 0px,#ffffd5 251px,#ffd9b4 341px)"></div><div style="top:18px;left:0px;width:342px;height:3px;background:linear-gradient(90deg,#92ffda 0px,#ffffd6 248px,#ffd8b4 341px)"></div><div style="top:21px;left:0px;width:342px;height:3px;background:linear-gradient(90deg,#93ffdb 0px,#ffffd8 245px,#ffd7b4 341px)"></div><div style="top:24px;left:0px;width:342px;height:3px;background:linear-gradient(90deg,#94ffdc 0px,#ffffd9 242px,#ffd5b5 341px)"></div><div style="top:27px;left:0px;width:342px;height:3px;background:linear-gradient(90deg,#94ffde 0px,#ffffdb 239px,#ffd4b5 341px)"></div><div style="top:30px;left:0px;width:342px;height:3px;background:linear-gradient(90deg,#95ffdf 0px,#ffffdc 236px,#ffd3b5 341px)"></div><div style="top:33px;left:0px;width:342px;height:3px;background:linear-gradient(90deg,#96ffe0 0px,#ffffde 234px,#ffd2b5 341px)"></div><div style="top:36px;left:0px;width:342px;height:3px;background:linear-gradient(90deg,#97ffe2 0px,#ffffdf 231px,#ffd1b5 341px)"></div><div style="top:39px;left:0px;width:342px;height:3px;background:linear-gradient(90deg,#98ffe3 0px,#ffffe0 228px,#ffd0b6 341px)"></div><div style="top:42px;left:0px;width:342px;height:3px;background:linear-gradient(90deg,#99ffe4 0px,#ffffe2 225px,#ffceb6 341px)"></div><div style="top:45px;left:0px;width:342px;height:3px;background:linear-gradient(90deg,#9affe6 0px,#ffffe3 222px,#ffcdb6 341px)"></div><div style="top:48px;left:0px;width:342px;height:3px;background:linear-gradient(90deg,#9bffe7 0px,#ffffe5 219px,#ffccb6 341px)"></div><div style="top:51px;left:0px;width:342px;height:3px;background:linear-gradient(90deg,#9cffe8 0px,#ffffe6 216px,#ffcbb7 341px)"></div><div style="top:54px;left:0px;width:342px;height:3px;background:linear-gradient(90deg,#9dffea 0px,#ffffe8 213px,#ffcab7 341px)"></div><div style="top:57px;left:0px;width:342px;height:3px;background:linear-gradient(90deg,#9effeb 0px,#ffffea 210px,#ffc9b7 341px)"></div><div style="top:60px;left:0px;width:342px;height:3px;background:linear-gradient(90deg,#9fffed 0px,#ffffeb 207px,#ffc8b7 341px)"></div><div style="top:63px;left:0px;width:342px;height:3px;background:linear-gradient(90deg,#a0ffee 0px,#ffffec 205px,#ffc7b7 341px)"></div><div style="top:66px;left:0px;width:342px;height:3px;background:linear-gradient(90deg,#a1ffef 0px,#ffe 202px,#ffc5b8 341px)"></div><div style="top:69px;left:0px;width:342px;height:3px;background:linear-gradient(90deg,#a2fff1 0px,#fffff0 199px,#ffc4b8 341px)"></div><div style="top:72px;left:0px;width:342px;height:3px;background:linear-gradient(90deg,#a3fff2 0px,#fffff1 196px,#ffc3b8 341px)"></div><div style="top:75px;left:0px;width:342px;height:3px;background:linear-gradient(90deg,#a5fff4 0px,#fffff3 193px,#ffdfd4 264px,#ffc2b8 341px)"></div><div style="top:78px;left:0px;width:342px;height:3px;background:linear-gradient(90deg,#a6fff5 0px,#fffff4 190px,#ffded4 263px,#ffc1b9 341px)"></div><div style="top:81px;left:0px;width:342px;height:3px;background:linear-gradient(90deg,#a7fff6 0px,#fffff6 187px,#ffddd5 261px,#ffc0b9 341px)"></div><div style="top:84px;left:0px;width:342px;height:3px;background:linear-gradient(90deg,#a8fff8 0px,#fffff7 184px,#ffdcd6 260px,#ffbfb9 341px)"></div><div style="top:87px;left:0px;width:342px;height:3px;background:linear-gradient(90deg,#a9fff9 0px,#fffff9 181px,#ffdcd7 258px,#ffbeb9 341px)"></div><div style="top:90px;left:0px;width:342px;height:3px;background:linear-gradient(90deg,#aafffb 0px,#fffffb 178px,#ffdcd8 256px,#ffbdb9 341px)"></div><div style="top:93px;left:0px;width:342px;height:3px;background:linear-gradient(90deg,#abfffc 0px,#fffffc 176px,#ffdbd9 254px,#ffbcba 341px)"></div><div style="top:96px;left:0px;width:342px;height:3px;background:linear-gradient(90deg,#acfffe 0px,#fffffe 173px,#ffdbda 252px,#ffbaba 341px)"></div><div style="top:99px;left:0px;width:342px;height:3px;background:linear-gradient(90deg,#adffff 0px,#fffeff 171px,#ffdada 251px,#ffb9ba 341px)"></div><div style="top:102px;left:0px;width:342px;height:3px;background:linear-gradient(90deg,#adfdff 0px,#fffdff 171px,#ffd8db 251px,#ffb8ba 341px)"></div><div style="top:105px;left:0px;width:342px;height:3px;background:linear-gradient(90deg,#adfcff 0px,#fffbff 171px,#ffd7da 252px,#ffb7ba 341px)"></div><div style="top:108px;left:0px;width:342px;height:3px;background:linear-gradient(90deg,#adfaff 0px,#fffaff 171px,#ffd6da 252px,#ffb6bb 341px)"></div><div style="top:111px;left:0px;width:342px;height:3px;background:linear-gradient(90deg,#adf9ff 0px,#fff8ff 172px,#ffd4db 252px,#ffb5bb 341px)"></div><div style="top:114px;left:0px;width:342px;height:3px;background:linear-gradient(90deg,#adf7ff 0px,#fff6ff 172px,#ffd3db 252px,#ffb4bb 341px)"></div><div style="top:117px;left:0px;width:342px;height:3px;background:linear-gradient(90deg,#aef6ff 0px,#fff5ff 172px,#ffd2db 252px,#ffb3bb 341px)"></div><div style="top:120px;left:0px;width:342px;height:3px;background:linear-gradient(90deg,#aef4ff 0px,#fff3ff 172px,#ffd0db 253px,#ffb2bb 341px)"></div><div style="top:123px;left:0px;width:342px;height:3px;background:linear-gradient(90deg,#aef3ff 0px,#fff1ff 173px,#ffcfdb 252px,#ffb1bc 341px)"></div><div style="top:126px;left:0px;width:342px;height:3px;background:linear-gradient(90deg,#aef1ff 0px,#fff0ff 173px,#ffcedb 252px,#ffb0bc 341px)"></div><div style="top:129px;left:0px;width:342px;height:3px;background:linear-gradient(90deg,#aef0ff 0px,#ffefff 173px,#ffcddc 252px,#ffafbc 341px)"></div><div style="top:132px;left:0px;width:342px;height:3px;background:linear-gradient(90deg,#aeeeff 0px,#ffedff 173px,#ffcbdb 253px,#ffaebc 341px)"></div><div style="top:135px;left:0px;width:342px;height:3px;background:linear-gradient(90deg,#aeedff 0px,#ffebff 174px,#ffcadc 253px,#ffadbc 341px)"></div><div style="top:138px;left:0px;width:342px;height:3px;background:linear-gradient(90deg,#aeecff 0px,#ffeaff 174px,#ffc9dc 253px,#ffacbd 341px)"></div><div style="top:141px;left:0px;width:342px;height:3px;background:linear-gradient(90deg,#aeeaff 0px,#ffe8ff 174px,#ffc8dc 253px,#ffabbd 341px)"></div><div style="top:144px;left:0px;width:342px;height:3px;background:linear-gradient(90deg,#aee9ff 0px,#ffe7ff 174px,#ffc7dc 253px,#ffaabd 341px)"></div><div style="top:147px;left:0px;width:342px;height:3px;background:linear-gradient(90deg,#aee7ff 0px,#ffe5ff 174px,#ffc5dc 254px,#ffa9bd 341px)"></div><div style="top:150px;left:0px;width:342px;height:3px;background:linear-gradient(90deg,#aee6ff 0px,#ffe4ff 175px,#ffc4dc 253px,#ffa8bd 341px)"></div><div style="top:153px;left:0px;width:342px;height:3px;background:linear-gradient(90deg,#afe4ff 0px,#ffe2ff 175px,#ffc3dd 253px,#ffa7be 341px)"></div><div style="top:156px;left:0px;width:342px;height:3px;background:linear-gradient(90deg,#afe3ff 0px,#ffe1ff 175px,#ffc1dc 254px,#ffa6be 341px)"></div><div style="top:159px;left:0px;width:342px;height:3px;background:linear-gradient(90deg,#afe2ff 0px,#ffdfff 175px,#ffc0dd 254px,#ffa5be 341px)"></div><div style="top:162px;left:0px;width:342px;height:3px;background:linear-gradient(90deg,#afe0ff 0px,#ffdeff 176px,#ffbfdd 254px,#ffa4be 341px)"></div><div style="top:165px;left:0px;width:342px;height:3px;background:linear-gradient(90deg,#afdfff 0px,#ffdcff 176px,#ffbedd 254px,#ffa3be 341px)"></div><div style="top:168px;left:0px;width:342px;height:3px;background:linear-gradient(90deg,#afdeff 0px,#ffdbff 176px,#ffbddd 254px,#ffa2bf 341px)"></div><div style="top:171px;left:0px;width:342px;height:3px;background:linear-gradient(90deg,#afdcff 0px,#ffdaff 176px,#fbd 255px,#ffa1bf 341px)"></div><div style="top:174px;left:0px;width:342px;height:3px;background:linear-gradient(90deg,#afdbff 0px,#ffd8ff 176px,#ffbadd 255px,#ffa0bf 341px)"></div><div style="top:177px;left:0px;width:342px;height:3px;background:linear-gradient(90deg,#afdaff 0px,#ffd7ff 177px,#ffb9dd 255px,#ff9fbf 341px)"></div><div style="top:180px;left:0px;width:342px;height:3px;background:linear-gradient(90deg,#afd8ff 0px,#ffd5ff 177px,#ffb8dd 255px,#ff9ebf 341px)"></div><div style="top:183px;left:0px;width:342px;height:3px;background:linear-gradient(90deg,#afd7ff 0px,#ffd4ff 177px,#ffb7dd 255px,#ff9dc0 341px)"></div><div style="top:186px;left:0px;width:342px;height:3px;background:linear-gradient(90deg,#afd6ff 0px,#ffd2ff 177px,#ffb5dd 256px,#ff9cc0 341px)"></div><div style="top:189px;left:0px;width:342px;height:3px;background:linear-gradient(90deg,#b0d4ff 0px,#ffd1ff 178px,#ffb4de 255px,#ff9bc0 341px)"></div><div style="top:192px;left:0px;width:342px;height:3px;background:linear-gradient(90deg,#b0d3ff 0px,#ffd0ff 178px,#ffb3de 255px,#ff9ac0 341px)"></div><div style="top:195px;left:0px;width:342px;height:3px;background:linear-gradient(90deg,#b0d2ff 0px,#ffceff 178px,#ffb2de 255px,#ff99c0 341px)"></div><div style="top:198px;left:0px;width:342px;height:1px;background:linear-gradient(90deg,#b0d1ff 0px,#ffcdff 178px,#ffb1de 256px,#ff98c0 341px)"></div></div><div style="left:0;top:0;width:342px;height:199px;border:1px solid rgba(120,120,120,.55)"></div></div>
<div style="left:801px;top:769.5px;width:15px;height:14.5px;border:1.6px solid #000"></div>
<div style="left:808.5px;top:769.5px;width:9px;height:9px;border-radius:50%;background:#c0c0c0;border:1px solid #222"></div>
<div style="left:800px;top:775px;width:9px;height:9px;border-radius:50%;background:#fff;border:1px solid #000"></div>
<div style="left:996px;top:662.5px;width:654px;height:225px;background:#000;"></div>
<div style="left:997px;top:663.5px;width:651px;height:222px;background:#3b3b3b;"></div>
<div style="left:997px;top:663.5px;width:634px;height:33px;background:linear-gradient(#313131,#2b2b2b 50%,#1e1e1e 52%,#101010);"></div>
<span class="t" style="left:1104.52px;top:670.52px;font-size:19px;color:#f2f2f2;transform:scaleX(0.8620);transform-origin:50% 0;">White</span>
<span class="t" style="left:1189.12px;top:670.52px;font-size:19px;color:#f2f2f2;transform:scaleX(0.8620);transform-origin:50% 0;">Red</span>
<span class="t" style="left:1257.90px;top:670.52px;font-size:19px;color:#f2f2f2;transform:scaleX(0.8620);transform-origin:50% 0;">Green</span>
<span class="t" style="left:1343.04px;top:670.52px;font-size:19px;color:#f2f2f2;transform:scaleX(0.8620);transform-origin:50% 0;">Blue</span>
<span class="t" style="left:1417.62px;top:670.52px;font-size:19px;color:#f2f2f2;transform:scaleX(0.8620);transform-origin:50% 0;">Cyan</span>
<span class="t" style="left:1480.58px;top:670.52px;font-size:19px;color:#f2f2f2;transform:scaleX(0.8620);transform-origin:50% 0;">Magenta</span>
<span class="t" style="left:1568.19px;top:670.52px;font-size:19px;color:#f2f2f2;transform:scaleX(0.8620);transform-origin:50% 0;">Yellow</span>
<div style="left:997px;top:696.5px;width:634px;height:170.5px;overflow:hidden">
<div style="left:0px;top:0px;width:634px;height:31px;background:#3d3d3d;"></div>
<span class="t" style="left:13.50px;top:7.62px;font-size:19px;color:#f4f4f4;font-weight:bold;transform:scaleX(0.8300);transform-origin:0 0;">x: CIE31</span>
<span class="t" style="left:97.60px;top:7.62px;font-size:19px;color:#f2f2f2;transform:scaleX(0.8620);transform-origin:0 0;">0,3135</span>
<span class="t" style="left:175.35px;top:7.62px;font-size:19px;color:#f2f2f2;transform:scaleX(0.8620);transform-origin:0 0;">0,6527</span>
<span class="t" style="left:253.10px;top:7.62px;font-size:19px;color:#f2f2f2;transform:scaleX(0.8620);transform-origin:0 0;">0,2977</span>
<span class="t" style="left:330.85px;top:7.62px;font-size:19px;color:#f2f2f2;transform:scaleX(0.8620);transform-origin:0 0;">0,1493</span>
<span class="t" style="left:408.60px;top:7.62px;font-size:19px;color:#f2f2f2;transform:scaleX(0.8620);transform-origin:0 0;">0,2219</span>
<span class="t" style="left:486.35px;top:7.62px;font-size:19px;color:#f2f2f2;transform:scaleX(0.8620);transform-origin:0 0;">0,3241</span>
<span class="t" style="left:564.10px;top:7.62px;font-size:19px;color:#f2f2f2;transform:scaleX(0.8620);transform-origin:0 0;">0,4221</span>
<div style="left:0px;top:31px;width:634px;height:31px;background:#808080;"></div>
<span class="t" style="left:13.50px;top:38.62px;font-size:19px;color:#f4f4f4;font-weight:bold;transform:scaleX(0.8300);transform-origin:0 0;">y: CIE31</span>
<span class="t" style="left:97.60px;top:38.62px;font-size:19px;color:#f2f2f2;transform:scaleX(0.8620);transform-origin:0 0;">0,3296</span>
<span class="t" style="left:175.35px;top:38.62px;font-size:19px;color:#f2f2f2;transform:scaleX(0.8620);transform-origin:0 0;">0,3304</span>
<span class="t" style="left:253.10px;top:38.62px;font-size:19px;color:#f2f2f2;transform:scaleX(0.8620);transform-origin:0 0;">0,6069</span>
<span class="t" style="left:330.85px;top:38.62px;font-size:19px;color:#f2f2f2;transform:scaleX(0.8620);transform-origin:0 0;">0,0605</span>
<span class="t" style="left:408.60px;top:38.62px;font-size:19px;color:#f2f2f2;transform:scaleX(0.8620);transform-origin:0 0;">0,3280</span>
<span class="t" style="left:486.35px;top:38.62px;font-size:19px;color:#f2f2f2;transform:scaleX(0.8620);transform-origin:0 0;">0,1544</span>
<span class="t" style="left:564.10px;top:38.62px;font-size:19px;color:#f2f2f2;transform:scaleX(0.8620);transform-origin:0 0;">0,5062</span>
<div style="left:0px;top:62px;width:634px;height:31px;background:#3d3d3d;"></div>
<span class="t" style="left:13.50px;top:69.62px;font-size:19px;color:#f4f4f4;font-weight:bold;transform:scaleX(0.8300);transform-origin:0 0;">Y</span>
<span class="t" style="left:97.60px;top:69.62px;font-size:19px;color:#f2f2f2;transform:scaleX(0.8620);transform-origin:0 0;">430,3817</span>
<span class="t" style="left:175.35px;top:69.62px;font-size:19px;color:#f2f2f2;transform:scaleX(0.8620);transform-origin:0 0;">90,8270</span>
<span class="t" style="left:253.10px;top:69.62px;font-size:19px;color:#f2f2f2;transform:scaleX(0.8620);transform-origin:0 0;">302,6579</span>
<span class="t" style="left:330.85px;top:69.62px;font-size:19px;color:#f2f2f2;transform:scaleX(0.8620);transform-origin:0 0;">30,8595</span>
<span class="t" style="left:408.60px;top:69.62px;font-size:19px;color:#f2f2f2;transform:scaleX(0.8620);transform-origin:0 0;">335,3994</span>
<span class="t" style="left:486.35px;top:69.62px;font-size:19px;color:#f2f2f2;transform:scaleX(0.8620);transform-origin:0 0;">122,4956</span>
<span class="t" style="left:564.10px;top:69.62px;font-size:19px;color:#f2f2f2;transform:scaleX(0.8620);transform-origin:0 0;">397,7023</span>
<div style="left:0px;top:93px;width:634px;height:31px;background:#808080;"></div>
<span class="t" style="left:13.50px;top:100.62px;font-size:19px;color:#f4f4f4;font-weight:bold;transform:scaleX(0.8300);transform-origin:0 0;">Target Y</span>
<span class="t" style="left:97.60px;top:100.62px;font-size:19px;color:#f2f2f2;transform:scaleX(0.8620);transform-origin:0 0;">429,8533</span>
<span class="t" style="left:175.35px;top:100.62px;font-size:19px;color:#f2f2f2;transform:scaleX(0.8620);transform-origin:0 0;">91,4109</span>
<span class="t" style="left:253.10px;top:100.62px;font-size:19px;color:#f2f2f2;transform:scaleX(0.8620);transform-origin:0 0;">307,4132</span>
<span class="t" style="left:330.85px;top:100.62px;font-size:19px;color:#f2f2f2;transform:scaleX(0.8620);transform-origin:0 0;">31,0292</span>
<span class="t" style="left:408.60px;top:100.62px;font-size:19px;color:#f2f2f2;transform:scaleX(0.8620);transform-origin:0 0;">338,4425</span>
<span class="t" style="left:486.35px;top:100.62px;font-size:19px;color:#f2f2f2;transform:scaleX(0.8620);transform-origin:0 0;">122,4401</span>
<span class="t" style="left:564.10px;top:100.62px;font-size:19px;color:#f2f2f2;transform:scaleX(0.8620);transform-origin:0 0;">398,8241</span>
<div style="left:0px;top:124px;width:634px;height:31px;background:#3d3d3d;"></div>
<span class="t" style="left:13.50px;top:131.62px;font-size:19px;color:#f4f4f4;font-weight:bold;transform:scaleX(0.8300);transform-origin:0 0;">ΔE 2000</span>
<span class="t" style="left:97.60px;top:131.62px;font-size:19px;color:#f2f2f2;transform:scaleX(0.8620);transform-origin:0 0;">0,3190</span>
<span class="t" style="left:175.35px;top:131.62px;font-size:19px;color:#f2f2f2;transform:scaleX(0.8620);transform-origin:0 0;">2,1196</span>
<span class="t" style="left:253.10px;top:131.62px;font-size:19px;color:#f2f2f2;transform:scaleX(0.8620);transform-origin:0 0;">0,4936</span>
<span class="t" style="left:330.85px;top:131.62px;font-size:19px;color:#f2f2f2;transform:scaleX(0.8620);transform-origin:0 0;">0,3322</span>
<span class="t" style="left:408.60px;top:131.62px;font-size:19px;color:#f2f2f2;transform:scaleX(0.8620);transform-origin:0 0;">0,4530</span>
<span class="t" style="left:486.35px;top:131.62px;font-size:19px;color:#f2f2f2;transform:scaleX(0.8620);transform-origin:0 0;">0,3285</span>
<span class="t" style="left:564.10px;top:131.62px;font-size:19px;color:#f2f2f2;transform:scaleX(0.8620);transform-origin:0 0;">0,5437</span>
<div style="left:0px;top:155px;width:634px;height:31px;background:#808080;"></div>
<span class="t" style="left:13.50px;top:162.62px;font-size:19px;color:#f4f4f4;font-weight:bold;transform:scaleX(0.8300);transform-origin:0 0;">ΔE ITP</span>
<span class="t" style="left:97.60px;top:162.62px;font-size:19px;color:#f2f2f2;transform:scaleX(0.8620);transform-origin:0 0;">0,4564</span>
<span class="t" style="left:175.35px;top:162.62px;font-size:19px;color:#f2f2f2;transform:scaleX(0.8620);transform-origin:0 0;">12,8316</span>
<span class="t" style="left:253.10px;top:162.62px;font-size:19px;color:#f2f2f2;transform:scaleX(0.8620);transform-origin:0 0;">3,0452</span>
<span class="t" style="left:330.85px;top:162.62px;font-size:19px;color:#f2f2f2;transform:scaleX(0.8620);transform-origin:0 0;">1,9127</span>
<span class="t" style="left:408.60px;top:162.62px;font-size:19px;color:#f2f2f2;transform:scaleX(0.8620);transform-origin:0 0;">2,0428</span>
<span class="t" style="left:486.35px;top:162.62px;font-size:19px;color:#f2f2f2;transform:scaleX(0.8620);transform-origin:0 0;">3,5843</span>
<span class="t" style="left:564.10px;top:162.62px;font-size:19px;color:#f2f2f2;transform:scaleX(0.8620);transform-origin:0 0;">2,1279</span>
</div>
<div style="left:1631px;top:696.5px;width:17px;height:170.5px;background:#585858;"></div>
<div style="left:1631.5px;top:698px;width:16px;height:17px;border-radius:4px;background:#808080;border:1px solid #9a9a9a"></div>
<svg style="left:1631.5px;top:698px" width="16" height="17"><path d="M3 12.5h10l-5-7z" fill="#333"/></svg>
<div style="left:1631.5px;top:848.5px;width:16px;height:17px;border-radius:4px;background:#808080;border:1px solid #9a9a9a"></div>
<svg style="left:1631.5px;top:848.5px" width="16" height="17"><path d="M3 5h10l-5 7z" fill="#333"/></svg>
<div style="left:1633.5px;top:718px;width:12.5px;height:107px;background:#424242;border-radius:6px"></div>
<div style="left:997px;top:867px;width:634px;height:19px;background:#585858;"></div>
<div style="left:998px;top:868.5px;width:16px;height:16.5px;border-radius:4px;background:#808080;border:1px solid #9a9a9a"></div>
<svg style="left:998px;top:868.5px" width="16" height="16.5"><path d="M11.5 3v10.5l-7-5.25z" fill="#333"/></svg>
<div style="left:1614.5px;top:868.5px;width:16px;height:16.5px;border-radius:4px;background:#808080;border:1px solid #9a9a9a"></div>
<svg style="left:1614.5px;top:868.5px" width="16" height="16.5"><path d="M4.5 3v10.5l7-5.25z" fill="#333"/></svg>
<div style="left:1016px;top:870px;width:530px;height:14px;background:#3e3e3e;border-radius:7px"></div>
<div style="left:2.3px;top:931px;width:155.5px;height:70px;border-radius:5px 5px 0 0;background:linear-gradient(#a0a0a0,#8a8a8a 30%,#6c6c6c);border:1px solid #b0b0b0;border-bottom:none"></div>
<div style="left:8.8px;top:937px;width:143px;height:45px;border-radius:4px;background:#c0c0c0;box-shadow:inset 1px 1px 2px rgba(0,0,0,.35),0 0 0 1px rgba(60,60,60,.35)"></div>
<span class="t" style="left:62.61px;top:989.40px;font-size:13px;color:#333;font-weight:bold;transform:scaleX(0.9500);transform-origin:50% 0;">White</span>
<div style="left:160.2px;top:931px;width:155.5px;height:70px;border-radius:5px 5px 0 0;background:linear-gradient(#a0a0a0,#8a8a8a 30%,#6c6c6c);border:1px solid #b0b0b0;border-bottom:none"></div>
<div style="left:166.7px;top:937px;width:143px;height:45px;border-radius:4px;background:#c00000;box-shadow:inset 1px 1px 2px rgba(0,0,0,.35),0 0 0 1px rgba(60,60,60,.35)"></div>
<span class="t" style="left:225.92px;top:989.40px;font-size:13px;color:#333;font-weight:bold;transform:scaleX(0.9500);transform-origin:50% 0;">Red</span>
<div style="left:318.1px;top:931px;width:155.5px;height:70px;border-radius:5px 5px 0 0;background:linear-gradient(#a0a0a0,#8a8a8a 30%,#6c6c6c);border:1px solid #b0b0b0;border-bottom:none"></div>
<div style="left:324.6px;top:937px;width:143px;height:45px;border-radius:4px;background:#00c000;box-shadow:inset 1px 1px 2px rgba(0,0,0,.35),0 0 0 1px rgba(60,60,60,.35)"></div>
<span class="t" style="left:377.31px;top:989.40px;font-size:13px;color:#333;font-weight:bold;transform:scaleX(0.9500);transform-origin:50% 0;">Green</span>
<div style="left:476px;top:931px;width:155.5px;height:70px;border-radius:5px 5px 0 0;background:linear-gradient(#a0a0a0,#8a8a8a 30%,#6c6c6c);border:1px solid #b0b0b0;border-bottom:none"></div>
<div style="left:482.5px;top:937px;width:143px;height:45px;border-radius:4px;background:#0000c0;box-shadow:inset 1px 1px 2px rgba(0,0,0,.35),0 0 0 1px rgba(60,60,60,.35)"></div>
<span class="t" style="left:539.92px;top:989.40px;font-size:13px;color:#333;font-weight:bold;transform:scaleX(0.9500);transform-origin:50% 0;">Blue</span>
<div style="left:633.9px;top:931px;width:155.5px;height:70px;border-radius:5px 5px 0 0;background:linear-gradient(#a0a0a0,#8a8a8a 30%,#6c6c6c);border:1px solid #b0b0b0;border-bottom:none"></div>
<div style="left:640.4px;top:937px;width:143px;height:45px;border-radius:4px;background:#00c0c0;box-shadow:inset 1px 1px 2px rgba(0,0,0,.35),0 0 0 1px rgba(60,60,60,.35)"></div>
<span class="t" style="left:696.01px;top:989.40px;font-size:13px;color:#333;font-weight:bold;transform:scaleX(0.9500);transform-origin:50% 0;">Cyan</span>
<div style="left:791.8px;top:931px;width:155.5px;height:70px;border-radius:5px 5px 0 0;background:linear-gradient(#a0a0a0,#8a8a8a 30%,#6c6c6c);border:1px solid #b0b0b0;border-bottom:none"></div>
<div style="left:798.3px;top:937px;width:143px;height:45px;border-radius:4px;background:#c000c0;box-shadow:inset 1px 1px 2px rgba(0,0,0,.35),0 0 0 1px rgba(60,60,60,.35)"></div>
<span class="t" style="left:843.44px;top:989.40px;font-size:13px;color:#333;font-weight:bold;transform:scaleX(0.9500);transform-origin:50% 0;">Magenta</span>
<div style="left:949.7px;top:931px;width:155.5px;height:70px;border-radius:5px 5px 0 0;background:linear-gradient(#a0a0a0,#8a8a8a 30%,#6c6c6c);border:1px solid #b0b0b0;border-bottom:none"></div>
<div style="left:956.2px;top:937px;width:143px;height:45px;border-radius:4px;background:#c0c000;box-shadow:inset 1px 1px 2px rgba(0,0,0,.35),0 0 0 1px rgba(60,60,60,.35)"></div>
<span class="t" style="left:1007.47px;top:989.40px;font-size:13px;color:#333;font-weight:bold;transform:scaleX(0.9500);transform-origin:50% 0;">Yellow</span>
<div style="left:1107.6px;top:931px;width:155.5px;height:70px;border-radius:5px 5px 0 0;background:#202020;border:1px solid #2a2a2a"></div>
<div style="left:1114.1px;top:937px;width:143px;height:45px;border-radius:4px;background:#ffffff;box-shadow:inset 1px 1px 2px rgba(0,0,0,.35),0 0 0 1px rgba(60,60,60,.35)"></div>
<span class="t" style="left:1168.62px;top:989.40px;font-size:13px;color:#fff;font-weight:bold;transform:scaleX(0.9500);transform-origin:50% 0;">100W</span>
<div style="left:1267.5px;top:930.5px;width:59.5px;height:22.5px;border-radius:6px 0 0 0;background:linear-gradient(#9a9a9a,#7c7c7c);border-top:1px solid #b8b8b8;border-left:1px solid #aaa"></div>
<div style="left:1287px;top:933px;width:19px;height:17px;border-radius:50%;background:linear-gradient(#6c6c6c,#949494)"></div>
<svg style="left:1290.5px;top:937px" width="12" height="7"><path d="M0 6.5h12l-6-6z" fill="#3a3a3a"/></svg>
<div style="left:1267.5px;top:954px;width:59.5px;height:50px;background:linear-gradient(#8c8c8c,#666);border-top:1px solid #aaa;border-left:1px solid #999"></div>
<div style="left:1278px;top:961.5px;width:38px;height:50px;border-radius:7px;border:3px solid #2c2c2c;background:linear-gradient(#a8a8a8,#8a8a8a 45%,#6a6a6a 46%,#707070)"></div>
<div style="left:1289px;top:971.5px;width:17px;height:17px;background:#000;"></div>
<div style="left:1328px;top:929.7px;width:283px;height:38.3px;background:#3a3a3a;"></div>
<div style="left:1328.5px;top:929.7px;width:57px;height:38.3px;background:linear-gradient(#a8a8a8,#8e8e8e 40%,#6c6c6c);border-top:1px solid rgba(215,215,215,.55)"></div>
<div style="left:1345px;top:937.3px;width:24px;height:24px;border-radius:50%;background:linear-gradient(#7a7a7a,#989898)"></div>
<div style="left:1352.4px;top:944.3px;width:10px;height:10px;background:#303030;"></div>
<div style="left:1386.7px;top:929.7px;width:55.3px;height:38.3px;background:linear-gradient(#a8a8a8,#8e8e8e 40%,#6c6c6c);border-top:1px solid rgba(215,215,215,.55)"></div>
<div style="left:1402.35px;top:937.3px;width:24px;height:24px;border-radius:50%;background:linear-gradient(#7a7a7a,#989898)"></div>
<svg style="left:1410.5px;top:943.5px" width="12" height="13"><path d="M0.5 0.5v12l10.5-6z" fill="#2e2e2e"/></svg>
<div style="left:1443px;top:929.7px;width:55.7px;height:38.3px;background:linear-gradient(#7e7e7e,#585858);border-top:1px solid rgba(215,215,215,.55)"></div>
<div style="left:1458.85px;top:937.3px;width:24px;height:24px;border-radius:50%;background:linear-gradient(#585858,#6c6c6c)"></div>
<svg style="left:1462px;top:942px" width="18" height="15" viewBox="0 0 18 15"><g fill="none" stroke="#2a2a2a" stroke-width="2.4"><path d="M6 1.5H3.2V13.5H6"/><path d="M12 1.5h2.8V13.5H12"/></g><path d="M5.5 7.5l3-2.3v4.6zM12.5 7.5l-3-2.3v4.6z" fill="#2a2a2a"/></svg>
<div style="left:1499.8px;top:929.7px;width:55.2px;height:38.3px;background:linear-gradient(#a8a8a8,#8e8e8e 40%,#6c6c6c);border-top:1px solid rgba(215,215,215,.55)"></div>
<div style="left:1515.4px;top:937.3px;width:24px;height:24px;border-radius:50%;background:linear-gradient(#7a7a7a,#989898)"></div>
<svg style="left:1517.5px;top:944px" width="20" height="11" viewBox="-10 -5.5 20 11"><path d="M0 0C-2 -3.2 -4 -3.4 -5.3 -3.4A3.4 3.4 0 0 0 -5.3 3.4C-4 3.4 -2 3.2 0 0C2 -3.2 4 -3.4 5.3 -3.4A3.4 3.4 0 0 1 5.3 3.4C4 3.4 2 3.2 0 0Z" fill="none" stroke="#383838" stroke-width="1.8"/></svg>
<div style="left:1556px;top:929.7px;width:55px;height:38.3px;background:linear-gradient(#a8a8a8,#8e8e8e 40%,#6c6c6c);border-top:1px solid rgba(215,215,215,.55)"></div>
<div style="left:1571.5px;top:937.3px;width:24px;height:24px;border-radius:50%;background:linear-gradient(#7a7a7a,#989898)"></div>
<svg style="left:1574.5px;top:940.3px" width="18" height="18" viewBox="-9 -9 18 18"><g fill="none" stroke="#333" stroke-width="2.3"><path d="M-5.8 -1.2A6 6 0 0 1 4.2 -4.3"/><path d="M5.8 1.2A6 6 0 0 1 -4.2 4.3"/></g><path d="M6.8 -7.3v5.4h-5.4z" fill="#333"/><path d="M-6.8 7.3v-5.4h5.4z" fill="#333"/></svg>
<svg style="left:1616px;top:925.5px" width="44" height="44" viewBox="-22 -22 44 44"><g fill="rgba(0,0,0,.5)" transform="translate(1.6,2)"><path d="M-2.7 0L-4.4 -17L4.4 -17L2.7 0Z" transform="rotate(0)"/><path d="M-2.7 0L-4.4 -17L4.4 -17L2.7 0Z" transform="rotate(60)"/><path d="M-2.7 0L-4.4 -17L4.4 -17L2.7 0Z" transform="rotate(120)"/><path d="M-2.7 0L-4.4 -17L4.4 -17L2.7 0Z" transform="rotate(180)"/><path d="M-2.7 0L-4.4 -17L4.4 -17L2.7 0Z" transform="rotate(240)"/><path d="M-2.7 0L-4.4 -17L4.4 -17L2.7 0Z" transform="rotate(300)"/></g><g fill="#e40a0a"><path d="M-2.7 0L-4.4 -17L4.4 -17L2.7 0Z" transform="rotate(0)"/><path d="M-2.7 0L-4.4 -17L4.4 -17L2.7 0Z" transform="rotate(60)"/><path d="M-2.7 0L-4.4 -17L4.4 -17L2.7 0Z" transform="rotate(120)"/><path d="M-2.7 0L-4.4 -17L4.4 -17L2.7 0Z" transform="rotate(180)"/><path d="M-2.7 0L-4.4 -17L4.4 -17L2.7 0Z" transform="rotate(240)"/><path d="M-2.7 0L-4.4 -17L4.4 -17L2.7 0Z" transform="rotate(300)"/></g></svg>
<div style="left:1328.5px;top:969px;width:170px;height:40px;border-radius:7px 7px 0 0;background:linear-gradient(#b4b4b4,#9a9a9a 35%,#7a7a7a 80%);border:1px solid #c8c8c8"></div>
<div style="left:1354.5px;top:975px;width:25px;height:25px;border-radius:50%;background:linear-gradient(#8a8a8a,#a0a0a0)"></div>
<span class="t" style="left:1360.88px;top:976.38px;font-size:22px;color:#444;">«</span>
<span class="t" style="left:1399.50px;top:974.76px;font-size:31px;color:#3c3c3c;transform:scaleX(0.9287);transform-origin:0 0;text-shadow:0 0 1px #3c3c3c;">Back</span>
<div style="left:1500px;top:969px;width:172px;height:40px;border-radius:7px 7px 0 0;background:linear-gradient(#b4b4b4,#9a9a9a 35%,#7a7a7a 80%);border:1px solid #c8c8c8"></div>
<div style="left:1622px;top:975px;width:25px;height:25px;border-radius:50%;background:linear-gradient(#8a8a8a,#a0a0a0)"></div>
<span class="t" style="left:1628.38px;top:976.38px;font-size:22px;color:#444;">»</span>
<span class="t" style="left:1534.00px;top:974.76px;font-size:31px;color:#3c3c3c;text-shadow:0 0 1px #3c3c3c;">Next</span>
</div>
</body></html>
